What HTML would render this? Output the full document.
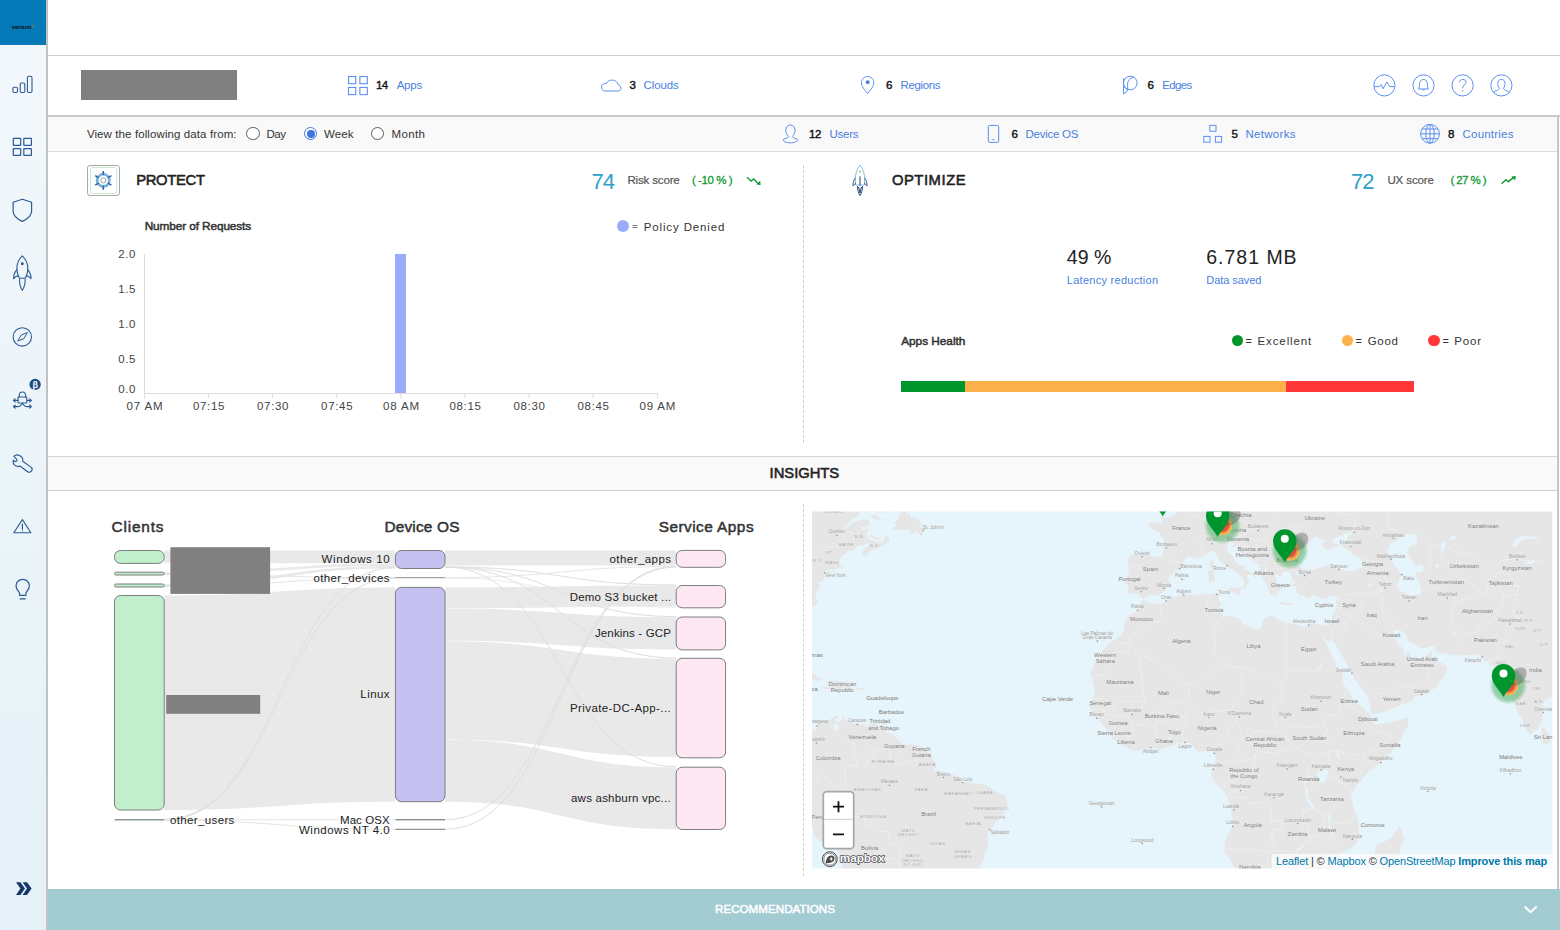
<!DOCTYPE html>
<html lang="en">
<head>
<meta charset="utf-8">
<title>Dashboard</title>
<style>
html,body{margin:0;padding:0;}
body{width:1560px;height:930px;position:relative;overflow:hidden;background:#fff;font-family:"Liberation Sans",sans-serif;}
.abs{position:absolute;}
.t{position:absolute;white-space:pre;line-height:1;font-family:"Liberation Sans",sans-serif;}
svg{position:absolute;overflow:visible;}
.ic{fill:none;stroke:#5b8ff0;stroke-width:1;}
.sic{fill:none;stroke:#2d5a94;stroke-width:1.1;stroke-linecap:round;stroke-linejoin:round;}
</style>
</head>
<body>
<!-- sidebar -->
<div class="abs" style="left:0;top:0;width:46px;height:930px;background:linear-gradient(180deg,#f3f8fc 0%,#eaf4f9 55%,#e4f1f7 100%);"></div>
<div class="abs" style="left:46px;top:0;width:2px;height:930px;background:#c2c2c2;"></div>
<div class="abs" style="left:0;top:0;width:46px;height:45px;background:#067ab8;"></div>
<span class="t" style="left:11.8px;top:25px;font-size:5.7px;font-weight:700;color:#0a0a0a;letter-spacing:-0.05px;">verizon</span>
<svg width="3" height="4" style="left:32.2px;top:24px" viewBox="0 0 3 4"><path d="M0.3,2.6 L0.9,3.4 L2.2,0.4" fill="none" stroke="#e8742a" stroke-width="0.6"/></svg>
<!-- top bar -->
<div class="abs" style="left:48px;top:55px;width:1512px;height:1px;background:#cfcfcf;"></div>
<!-- header row -->
<div class="abs" style="left:80.5px;top:70px;width:156.5px;height:30px;background:#808080;"></div>
<div class="abs" style="left:48px;top:115px;width:1512px;height:2px;background:#c9c9c9;"></div>
<!-- filter row -->
<div class="abs" style="left:48px;top:117px;width:1510px;height:34px;background:#f9f9f9;"></div>
<div class="abs" style="left:48px;top:151px;width:1510px;height:1px;background:#dcdcdc;"></div>
<div class="abs" style="left:1557px;top:116px;width:2px;height:814px;background:#c6c6c6;"></div>
<!-- radios -->
<div class="abs" style="left:246.4px;top:126.9px;width:11.2px;height:11.2px;border:1.5px solid #5c5c5c;border-radius:50%;background:#fff;"></div>
<div class="abs" style="left:303.9px;top:126.9px;width:11.2px;height:11.2px;border:1.5px solid #3d76e0;border-radius:50%;background:#fff;"></div>
<div class="abs" style="left:307.3px;top:130.3px;width:7.4px;height:7.4px;border-radius:50%;background:#3d76e0;"></div>
<div class="abs" style="left:370.9px;top:126.9px;width:11.2px;height:11.2px;border:1.5px solid #5c5c5c;border-radius:50%;background:#fff;"></div>
<!-- section divider -->
<div class="abs" style="left:803.2px;top:165px;width:0;height:277.5px;border-left:1px dashed #cfcfcf;"></div>
<div class="abs" style="left:803.2px;top:503.5px;width:0;height:372.5px;border-left:1px dashed #cfcfcf;"></div>
<!-- protect icon box -->
<div class="abs" style="left:87px;top:165px;width:30.7px;height:28.8px;border:1px solid #a9a9a9;border-radius:3px;background:#fff;"></div>
<div class="abs" style="left:89.6px;top:167.2px;width:25.6px;height:24.6px;border:1px solid #c5efd0;border-radius:2px;"></div>
<!-- chart -->
<div class="abs" style="left:144px;top:254px;width:1px;height:140px;background:#dcdcdc;"></div>
<div class="abs" style="left:144px;top:393px;width:514px;height:1px;background:#dcdcdc;"></div>
<div class="abs" style="left:394.8px;top:254px;width:11.7px;height:139px;background:#9aabfb;"></div>
<div class="abs" style="left:617px;top:220px;width:12px;height:12px;border-radius:50%;background:#9aabfb;"></div>
<!-- apps health -->
<div class="abs" style="left:901px;top:381.2px;width:64px;height:11.2px;background:#00962e;"></div>
<div class="abs" style="left:965px;top:381.2px;width:320.5px;height:11.2px;background:#fdb14b;"></div>
<div class="abs" style="left:1285.5px;top:381.2px;width:128.5px;height:11.2px;background:#fe3839;"></div>
<div class="abs" style="left:1231.5px;top:334.6px;width:11.6px;height:11.6px;border-radius:50%;background:#00962e;"></div>
<div class="abs" style="left:1341.5px;top:334.6px;width:11.6px;height:11.6px;border-radius:50%;background:#fdb14b;"></div>
<div class="abs" style="left:1428.2px;top:334.6px;width:11.6px;height:11.6px;border-radius:50%;background:#fe3839;"></div>
<!-- insights strip -->
<div class="abs" style="left:48px;top:456px;width:1509px;height:1px;background:#d6d6d6;"></div>
<div class="abs" style="left:48px;top:457px;width:1509px;height:33px;background:#f9f9f9;"></div>
<div class="abs" style="left:48px;top:490px;width:1509px;height:1px;background:#d0d0d0;"></div>
<!-- recommendations -->
<div class="abs" style="left:48px;top:889px;width:1512px;height:41px;background:#a3cbd2;"></div>
<!-- sankey -->
<svg width="1560" height="930" style="left:0;top:0" viewBox="0 0 1560 930">
<defs><pattern id="dots" width="4" height="4" patternUnits="userSpaceOnUse"><rect width="4" height="4" fill="#fde8f3"/><circle cx="1" cy="1" r="0.45" fill="#f8dcea"/><circle cx="3" cy="3" r="0.45" fill="#f8dcea"/></pattern></defs>
<path d="M164.2,550.6C279.79999999999995,550.6 279.79999999999995,550.6 395.4,550.6L395.4,563.2C279.79999999999995,563.2 279.79999999999995,563.2 164.2,563.2Z" fill="#e9e9e9"/>
<path d="M164.2,572.2C279.79999999999995,572.2 279.79999999999995,563.4 395.4,563.4L395.4,566.0C279.79999999999995,566.0 279.79999999999995,575.0 164.2,575.0Z" fill="#e9e9e9"/>
<path d="M164.2,584.0C279.79999999999995,584.0 279.79999999999995,566.0 395.4,566.0L395.4,568.4C279.79999999999995,568.4 279.79999999999995,587.0 164.2,587.0Z" fill="#e9e9e9"/>
<path d="M164.2,595.5C279.79999999999995,595.5 279.79999999999995,587.4 395.4,587.4L395.4,801.7C279.79999999999995,801.7 279.79999999999995,810.0 164.2,810.0Z" fill="#e9e9e9"/>
<path d="M164.2,574.5C279.79999999999995,574.5 279.79999999999995,577.7 395.4,577.7" fill="none" stroke="#dedede" stroke-width="0.8"/>
<path d="M164.2,586.5C279.79999999999995,586.5 279.79999999999995,578.0 395.4,578.0" fill="none" stroke="#dedede" stroke-width="0.8"/>
<path d="M164.2,819.3C279.79999999999995,819.3 279.79999999999995,567.5 395.4,567.5" fill="none" stroke="#dedede" stroke-width="1"/>
<path d="M164.2,820.0C279.79999999999995,820.0 279.79999999999995,578.0 395.4,578.0" fill="none" stroke="#dedede" stroke-width="1"/>
<path d="M164.2,819.7C279.79999999999995,819.7 279.79999999999995,819.7 395.4,819.7" fill="none" stroke="#e4e4e4" stroke-width="1"/>
<path d="M164.2,820.3C279.79999999999995,820.3 279.79999999999995,829.3 395.4,829.3" fill="none" stroke="#e4e4e4" stroke-width="1"/>
<path d="M445.0,550.6C560.6,550.6 560.6,550.6 676.2,550.6L676.2,565.5C560.6,565.5 560.6,565.5 445.0,565.5Z" fill="#e9e9e9"/>
<path d="M445.0,587.4C560.6,587.4 560.6,585.6 676.2,585.6L676.2,606.4C560.6,606.4 560.6,608.2 445.0,608.2Z" fill="#e9e9e9"/>
<path d="M445.0,608.6C560.6,608.6 560.6,617.2 676.2,617.2L676.2,649.4C560.6,649.4 560.6,640.8 445.0,640.8Z" fill="#e9e9e9"/>
<path d="M445.0,641.2C560.6,641.2 560.6,658.6 676.2,658.6L676.2,756.8C560.6,756.8 560.6,739.4 445.0,739.4Z" fill="#e9e9e9"/>
<path d="M445.0,739.8C560.6,739.8 560.6,767.4 676.2,767.4L676.2,829.3C560.6,829.3 560.6,801.7 445.0,801.7Z" fill="#e9e9e9"/>
<path d="M445.0,567.0C560.6,567.0 560.6,585.0 676.2,585.0" fill="none" stroke="#dedede" stroke-width="1"/>
<path d="M445.0,567.0C560.6,567.0 560.6,616.6 676.2,616.6" fill="none" stroke="#dedede" stroke-width="1"/>
<path d="M445.0,567.0C560.6,567.0 560.6,658.0 676.2,658.0" fill="none" stroke="#dedede" stroke-width="1"/>
<path d="M445.0,567.0C560.6,567.0 560.6,766.8 676.2,766.8" fill="none" stroke="#dedede" stroke-width="1"/>
<path d="M445.0,577.7C560.6,577.7 560.6,566.5 676.2,566.5" fill="none" stroke="#dedede" stroke-width="0.8"/>
<path d="M445.0,819.7C560.6,819.7 560.6,566.4 676.2,566.4" fill="none" stroke="#dedede" stroke-width="1"/>
<path d="M445.0,829.3C560.6,829.3 560.6,567.0 676.2,567.0" fill="none" stroke="#dedede" stroke-width="1"/>
<path d="M445.0,577.9C560.6,577.9 560.6,607.2 676.2,607.2" fill="none" stroke="#e6e6e6" stroke-width="0.8"/>
<rect x="114.5" y="550.5" width="49.7" height="12.9" rx="6" ry="6" fill="#c1efcd" stroke="#7d7d7d" stroke-width="1"/>
<rect x="114.5" y="572.2" width="49.7" height="2.8" rx="1.3999999999999773" ry="1.3999999999999773" fill="#c1efcd" stroke="#7d7d7d" stroke-width="1"/>
<rect x="114.5" y="584.0" width="49.7" height="3.0" rx="1.5" ry="1.5" fill="#c1efcd" stroke="#7d7d7d" stroke-width="1"/>
<rect x="114.5" y="595.5" width="49.7" height="214.5" rx="6" ry="6" fill="#c1efcd" stroke="#7d7d7d" stroke-width="1"/>
<rect x="114.5" y="819" width="49.7" height="1.6" rx="0.8" fill="#8d9a90"/>
<rect x="395.4" y="550.5" width="49.6" height="18.0" rx="6" ry="6" fill="#c4c1f0" stroke="#7d7d7d" stroke-width="1"/>
<rect x="395.4" y="577.2" width="49.6" height="1" fill="#8a8a8a"/>
<rect x="395.4" y="587.4" width="49.6" height="214.3" rx="6" ry="6" fill="#c4c1f0" stroke="#7d7d7d" stroke-width="1"/>
<rect x="395.4" y="819" width="49.6" height="1.4" fill="#8c8c8c"/>
<rect x="395.4" y="828.8" width="49.6" height="1" fill="#777"/>
<rect x="676.2" y="550.4" width="49.4" height="16.9" rx="6" ry="6" fill="url(#dots)" stroke="#7d7d7d" stroke-width="1"/>
<rect x="676.2" y="585.5" width="49.4" height="22.3" rx="6" ry="6" fill="url(#dots)" stroke="#7d7d7d" stroke-width="1"/>
<rect x="676.2" y="617.0" width="49.4" height="32.9" rx="6" ry="6" fill="url(#dots)" stroke="#7d7d7d" stroke-width="1"/>
<rect x="676.2" y="658.3" width="49.4" height="99.5" rx="6" ry="6" fill="url(#dots)" stroke="#7d7d7d" stroke-width="1"/>
<rect x="676.2" y="767.2" width="49.4" height="62.3" rx="6" ry="6" fill="url(#dots)" stroke="#7d7d7d" stroke-width="1"/>
<rect x="170.4" y="547.2" width="99.7" height="46.7" fill="#808080"/>
<rect x="166.2" y="695" width="94" height="18.8" fill="#808080"/>
</svg>
<!-- map -->
<svg width="1560" height="930" style="left:0;top:0" viewBox="0 0 1560 930">
<defs><clipPath id="mapclip"><rect x="812.0" y="511.5" width="740.3" height="357.0"/></clipPath></defs>
<rect x="812.0" y="511.5" width="740.3" height="357.0" fill="#e5f5fb"/>
<g clip-path="url(#mapclip)">
<path d="M887.8,512.2L890.6,511.5L858.9,511.5L859.6,511.9L861.7,512.1L865.0,511.9L868.2,511.8L871.5,511.9L875.2,512.1L879.4,512.4L883.6,512.4ZM813.6,606.6L814.8,605.5L815.9,604.7L817.1,604.1L817.7,603.0L817.7,601.4L817.1,599.4L816.1,596.9L815.2,595.2L814.3,594.4L814.3,593.8L815.0,593.6L815.8,592.9L816.7,591.7L817.8,590.1L819.0,587.8L819.5,586.0L819.5,584.5L819.2,583.6L818.5,583.0L818.0,582.1L817.8,581.0L818.4,581.0L819.8,582.3L821.0,582.4L822.2,581.3L823.1,580.1L823.8,579.0L824.3,577.4L824.5,575.3L824.7,574.0L824.7,573.2L825.0,572.5L825.7,571.8L827.0,570.9L828.9,570.1L830.7,569.5L832.6,569.4L834.2,569.2L835.6,568.9L836.8,568.6L837.7,568.3L838.6,568.0L839.6,567.7L840.3,567.6L840.7,567.8L841.6,567.7L842.9,567.4L843.5,566.9L843.5,566.1L843.2,565.5L842.7,565.1L842.6,565.2L843.1,566.0L842.7,566.4L841.6,566.6L840.8,566.4L840.4,565.8L839.9,564.9L839.0,563.7L839.1,562.6L840.0,561.7L840.4,560.7L840.2,559.4L840.6,557.9L841.8,556.1L843.6,554.5L846.2,553.1L847.8,551.9L848.5,551.0L849.6,550.7L851.0,551.0L852.6,550.6L854.5,549.5L855.9,548.3L856.8,546.9L858.4,545.9L860.8,545.5L862.5,545.1L863.7,545.0L865.1,544.4L866.7,543.5L867.9,543.3L868.6,544.0L870.0,544.3L872.1,544.5L872.2,544.7L870.3,544.8L868.9,545.2L868.0,545.8L866.4,546.9L864.0,548.5L862.5,550.5L861.8,553.0L862.1,554.9L863.2,556.1L864.5,556.2L865.9,555.3L867.4,553.9L869.0,552.1L870.7,550.7L872.3,549.8L875.0,548.7L878.7,547.4L881.7,546.2L884.1,545.1L885.6,544.2L886.3,543.4L887.5,542.5L889.3,541.6L889.8,540.6L889.3,539.7L888.9,538.5L888.6,537.2L888.3,535.9L887.8,534.6L887.0,534.7L885.8,536.2L884.7,538.4L883.7,541.2L882.6,542.3L881.6,541.5L880.1,541.4L878.2,542.0L876.0,541.9L873.5,540.9L871.4,540.1L869.7,539.3L868.7,538.8L868.2,538.6L867.5,537.4L866.6,535.1L866.4,533.8L866.8,533.5L867.5,531.9L868.5,529.2L868.5,528.0L867.5,528.5L866.1,529.0L864.3,529.5L862.5,529.2L860.9,528.0L860.5,527.3L861.5,526.9L863.1,526.8L865.4,526.8L867.5,526.1L869.4,524.8L870.2,523.5L870.0,522.3L869.3,521.2L868.1,520.2L866.1,519.6L863.3,519.4L860.2,520.0L856.7,521.1L853.8,522.4L851.5,523.8L849.1,525.4L846.8,527.4L845.0,529.3L843.9,531.1L842.0,532.9L839.5,534.7L838.1,535.5L837.8,535.1L838.8,533.9L840.9,531.8L842.6,529.7L844.0,527.5L845.5,525.7L847.1,524.2L848.9,522.4L850.8,520.4L852.7,519.0L854.8,518.3L856.9,516.6L859.0,513.9L859.6,512.1L858.7,511.5L812.0,511.5L812.0,607.4ZM882.0,520.0L875.9,515.3L868.9,514.9L873.1,518.0L878.2,519.7ZM869.4,536.3L870.8,537.2L873.6,539.2L878.2,540.5L880.6,537.6L875.9,537.6L871.3,533.7ZM827.0,573.4L831.6,572.3L834.4,570.8L834.0,570.5L831.2,571.4L826.1,572.0L824.9,573.4ZM812.1,653.9L813.9,657.3L814.6,658.1L814.6,655.6ZM817.9,660.3L818.6,660.5L816.5,658.1ZM817.2,663.9L814.9,661.7L816.3,663.7ZM820.7,666.1L818.6,662.9L820.0,665.6ZM825.1,667.5L823.3,667.5L824.7,669.9ZM836.3,671.6L832.1,671.8L835.8,672.6ZM812.1,680.8L814.9,680.7L817.0,680.7L818.4,680.8L820.3,680.5L822.7,679.6L823.6,679.1L822.7,678.9L821.0,678.3L818.5,677.5L816.7,676.5L815.8,675.3L813.6,674.1L812.0,673.6L812.0,680.8ZM829.3,674.2L826.1,675.2L828.9,675.9ZM835.6,690.3L836.4,691.2L837.1,691.0L837.8,689.6L838.9,688.8L840.3,688.7L841.7,688.4L843.1,687.9L844.8,687.8L846.9,687.9L848.4,688.2L849.4,688.6L850.1,688.4L850.7,687.5L850.6,686.6L849.8,685.8L848.3,685.2L846.2,684.8L845.6,684.4L846.6,683.9L846.2,683.3L844.6,682.5L842.8,681.9L841.0,681.5L838.9,681.2L836.7,681.0L835.0,681.1L833.7,681.4L832.5,681.3L831.3,680.9L829.9,680.8L828.3,681.0L827.5,681.3L827.5,681.8L828.2,682.7L829.6,684.0L830.8,685.3L831.8,686.6L831.8,687.3L830.8,687.6L828.4,687.5L824.7,687.0L822.7,687.1L822.4,687.8L823.2,688.3L825.0,688.7L827.3,688.9L830.2,688.9L832.5,689.1L834.3,689.6ZM856.1,687.5L856.3,690.0L863.8,689.8L863.8,687.9ZM814.4,689.8L812.0,688.4L812.0,690.3ZM882.7,699.3L884.3,697.5L881.5,697.7ZM881.0,726.2L885.2,726.0L885.7,722.6L882.9,723.3ZM910.1,531.1L910.4,532.1L909.5,533.6L909.6,534.4L910.8,534.6L911.9,534.2L913.1,533.2L914.6,532.2L916.5,531.2L917.3,531.8L917.0,533.9L917.6,534.4L919.0,533.3L919.7,533.6L919.7,535.4L920.3,536.3L921.5,536.3L922.6,534.8L923.6,531.9L923.7,529.7L922.9,528.2L921.8,527.4L920.4,527.4L920.4,526.4L921.8,524.4L921.5,523.4L919.4,523.4L918.8,522.7L919.7,521.4L919.6,520.0L918.4,518.7L916.7,517.8L914.4,517.5L912.3,517.5L910.4,517.8L909.8,517.1L910.5,515.4L910.3,514.4L909.1,514.1L907.6,514.2L905.7,514.9L905.7,513.7L907.1,511.5L901.5,511.5L901.3,512.0L899.9,515.1L898.6,517.5L897.5,519.2L896.1,521.1L894.4,523.1L894.6,524.1L896.4,524.1L896.2,525.1L893.9,527.1L892.8,528.6L893.0,529.6L894.1,530.0L896.0,529.8L898.1,529.8L900.4,530.0L903.1,530.1L906.1,530.1L908.4,530.4ZM1207.7,571.7L1208.6,577.5L1209.1,583.3L1211.9,581.6L1214.5,581.0L1214.9,574.0L1212.4,569.6ZM1187.2,576.6L1187.4,577.2L1189.1,577.8L1189.5,577.2ZM1185.6,578.7L1183.9,577.2L1180.5,579.3L1181.6,580.4L1183.7,581.0ZM1177.0,582.1L1175.1,583.0L1176.7,583.6ZM1091.7,617.0L1089.1,616.5L1090.7,617.5ZM1106.8,635.4L1105.0,636.9L1106.8,636.7ZM1086.8,637.4L1085.6,637.4L1086.3,639.2ZM1105.0,637.9L1101.9,641.2L1102.9,641.2L1105.0,639.9ZM1090.7,639.7L1091.7,641.5L1093.1,641.2L1094.2,638.7ZM1095.9,641.5L1096.3,642.7L1097.7,642.5L1097.7,640.7ZM883.6,702.8L884.1,701.4L883.0,700.9ZM885.9,705.1L884.3,704.4L885.7,706.5ZM885.7,708.7L885.0,707.8L885.0,709.7ZM891.8,712.6L892.5,712.2L891.5,711.5ZM1211.2,754.7L1208.9,754.4L1210.0,756.7ZM1201.0,769.8L1199.8,769.5L1200.3,771.1ZM813.5,830.6L814.2,832.8L813.7,833.2L814.9,835.2L817.7,838.6L820.5,841.0L823.3,842.4L826.2,843.8L829.2,845.2L831.5,846.4L833.2,847.3L834.7,848.5L836.3,850.0L838.2,851.8L840.7,853.7L842.1,856.7L842.4,860.7L842.5,864.9L842.4,868.5L978.9,868.5L979.6,866.8L981.0,864.4L982.3,862.4L983.4,860.7L984.1,858.6L984.4,856.0L985.1,853.8L986.2,851.9L987.0,849.5L987.4,846.5L987.7,844.3L988.1,842.9L988.1,841.0L987.9,838.7L987.8,836.1L987.8,833.1L988.3,831.1L989.5,829.9L990.7,828.9L991.8,828.0L993.0,826.3L994.2,823.8L995.3,821.8L996.3,820.5L997.6,819.4L999.1,818.5L1000.7,817.0L1002.3,815.1L1004.1,812.4L1005.9,808.8L1007.0,805.9L1007.2,803.8L1006.9,801.3L1005.9,798.4L1005.2,796.2L1004.6,794.9L1003.1,794.1L1000.6,793.9L998.2,793.2L995.9,792.1L993.6,790.6L991.3,788.5L988.9,786.9L986.6,785.5L984.3,784.5L981.9,783.9L979.3,783.7L976.2,783.9L972.7,783.4L968.8,782.3L965.9,782.1L964.0,782.8L962.7,782.5L962.0,781.4L961.2,780.1L960.3,778.5L958.6,777.2L956.3,776.1L953.6,775.1L950.4,774.2L947.9,774.1L945.9,774.8L944.4,775.7L943.5,776.9L943.3,776.8L943.9,775.4L944.1,774.0L944.0,772.8L942.6,771.6L939.8,770.4L937.3,770.3L935.2,771.4L933.7,771.8L932.8,771.3L932.9,770.5L934.1,769.4L935.2,768.3L936.4,767.2L936.8,765.8L936.6,764.2L935.7,762.7L934.1,761.5L932.8,759.1L931.8,755.5L930.9,753.3L930.0,752.4L929.3,751.9L928.8,751.6L927.9,750.9L926.5,749.7L923.8,748.1L919.8,746.2L916.5,745.2L913.7,745.0L910.1,744.8L905.6,744.7L902.9,744.2L902.0,743.5L900.8,742.5L899.3,741.4L898.1,740.2L897.3,738.8L896.3,737.6L895.1,736.5L893.6,735.4L891.8,734.6L890.6,733.9L890.1,733.4L889.0,733.1L887.1,732.9L886.1,731.9L885.8,730.1L884.9,728.7L883.3,727.6L881.6,727.1L880.0,727.0L878.7,726.7L877.8,726.2L877.0,725.7L876.3,725.0L876.5,724.5L877.7,724.3L878.9,724.0L880.3,723.5L879.5,723.3L876.3,723.5L873.5,723.5L871.1,723.5L870.0,723.7L870.2,724.2L869.7,724.8L868.6,725.4L867.3,725.8L865.9,725.9L864.3,725.5L862.6,724.5L860.7,723.9L858.7,723.8L856.5,723.9L853.9,724.1L852.3,723.6L851.6,722.5L850.6,721.5L849.5,720.6L848.0,720.1L846.1,720.0L844.9,719.8L844.5,719.7L844.2,718.9L844.2,717.3L843.6,716.6L842.5,716.7L842.0,717.3L842.3,718.6L842.3,719.4L842.0,719.9L841.1,720.6L839.5,721.5L837.9,722.0L836.5,722.1L835.5,721.4L834.8,720.0L835.1,719.0L836.5,718.5L837.5,718.0L837.9,717.3L837.5,716.6L836.3,715.8L835.0,716.0L833.7,717.2L832.2,718.3L830.6,719.0L829.3,719.7L828.4,720.3L826.9,720.6L824.8,720.7L823.0,721.0L821.6,721.5L820.1,722.4L818.5,723.9L817.6,725.7L817.3,727.7L816.4,729.3L814.8,730.4L813.4,731.3L812.4,732.0L812.0,732.6L812.0,827.5ZM834.0,728.7L834.0,725.1L835.8,723.3L838.4,724.6L838.6,728.3L836.3,730.7ZM846.1,841.3L848.9,845.0L846.6,844.5L843.3,840.3ZM1214.0,564.0L1213.1,559.1L1209.6,562.8L1210.5,567.6L1212.8,568.7ZM1164.1,517.7L1163.7,516.5L1162.7,515.9L1161.3,515.9L1161.1,517.7L1161.9,521.3L1161.8,523.1L1160.7,523.1L1159.0,522.7L1156.7,522.1L1154.4,522.0L1152.0,522.5L1150.0,523.2L1148.2,524.3L1147.8,525.5L1148.6,527.0L1150.2,528.2L1152.5,529.0L1154.7,530.1L1156.8,531.4L1158.3,532.2L1159.2,532.5L1159.8,533.3L1160.1,534.6L1161.1,536.3L1163.0,538.2L1164.0,540.1L1164.3,542.0L1164.3,544.4L1164.0,547.3L1163.4,550.5L1162.5,554.2L1161.6,556.4L1160.6,557.0L1159.0,557.2L1156.7,556.9L1154.6,556.6L1152.7,556.2L1149.6,555.9L1145.2,555.6L1141.4,555.5L1138.4,555.5L1135.8,555.2L1133.7,554.8L1132.1,555.1L1130.9,556.2L1129.4,557.5L1127.4,559.0L1126.9,560.8L1128.0,562.9L1128.6,565.5L1128.8,568.7L1128.7,571.6L1128.3,574.4L1127.4,576.9L1126.3,579.2L1125.6,581.3L1125.3,583.0L1125.9,584.3L1127.3,585.1L1128.1,586.4L1128.4,588.1L1128.3,590.2L1127.8,592.7L1128.8,594.0L1131.4,594.0L1133.7,593.7L1135.8,593.1L1137.7,593.8L1139.3,595.6L1141.0,597.2L1142.6,598.7L1143.8,599.2L1144.5,598.7L1145.9,597.7L1147.9,596.3L1150.0,595.6L1152.1,595.6L1154.4,595.5L1156.7,595.2L1158.3,595.2L1159.2,595.5L1160.2,594.8L1161.1,593.1L1162.6,591.9L1164.7,591.0L1166.1,589.6L1166.8,587.5L1168.0,585.8L1169.6,584.7L1169.8,583.0L1168.7,580.9L1168.5,579.1L1169.2,577.7L1170.4,575.9L1172.3,573.9L1173.7,572.3L1174.6,571.1L1176.3,570.1L1178.6,569.2L1180.9,568.0L1183.2,566.5L1184.5,565.2L1184.8,564.0L1184.5,562.8L1183.8,561.6L1184.3,559.9L1185.9,557.8L1187.8,556.7L1189.9,556.7L1191.9,556.9L1193.7,557.2L1195.4,557.6L1196.8,558.2L1198.3,558.4L1199.9,558.1L1201.4,557.2L1202.8,555.6L1204.6,554.4L1206.7,553.5L1208.5,552.4L1210.2,551.2L1212.0,551.0L1214.1,551.9L1215.8,553.3L1216.9,555.2L1217.7,557.0L1218.2,558.8L1219.1,560.5L1220.5,562.0L1222.0,563.2L1223.7,564.1L1225.1,565.2L1226.2,566.4L1227.2,567.3L1227.9,568.1L1229.4,568.8L1231.7,569.5L1233.6,570.5L1235.0,571.7L1236.4,572.6L1237.8,573.2L1238.7,574.0L1239.2,575.2L1240.2,576.1L1241.8,576.6L1243.0,577.8L1243.7,579.5L1244.2,581.4L1244.4,583.4L1244.0,585.3L1243.0,587.0L1242.5,588.0L1242.6,588.4L1243.1,588.7L1244.1,588.7L1245.0,588.0L1245.9,586.7L1246.5,585.5L1246.7,584.4L1247.4,583.6L1248.6,583.0L1249.2,582.1L1249.2,581.0L1248.6,580.0L1247.4,579.1L1247.2,577.7L1247.9,575.6L1248.6,574.5L1249.3,574.2L1250.5,574.5L1252.1,575.3L1253.0,576.1L1253.3,576.6L1253.8,577.2L1254.8,577.8L1255.4,577.7L1255.6,576.8L1255.1,575.6L1254.0,574.0L1252.1,572.5L1249.5,571.2L1247.2,569.9L1245.1,568.7L1244.3,567.5L1244.8,566.4L1244.6,565.7L1243.9,565.5L1242.5,565.4L1240.4,565.2L1238.5,564.4L1236.6,562.9L1234.9,560.5L1233.2,557.2L1231.4,554.7L1229.3,553.2L1227.9,551.9L1227.2,551.0L1227.1,549.8L1227.5,548.2L1227.5,546.6L1227.1,545.1L1227.8,543.7L1229.6,542.6L1231.4,542.2L1233.0,542.5L1233.5,543.7L1232.8,545.8L1232.9,547.1L1233.8,547.7L1234.9,547.3L1236.0,545.7L1237.2,545.4L1238.4,546.3L1239.3,548.2L1240.0,551.0L1241.7,553.3L1244.5,555.2L1247.2,556.9L1249.8,558.4L1251.7,559.7L1253.1,560.7L1255.0,562.1L1257.3,563.7L1258.9,565.8L1259.7,568.1L1260.1,570.6L1260.0,573.1L1260.6,575.1L1262.0,576.7L1262.9,578.1L1263.4,579.3L1264.3,580.5L1265.6,582.0L1266.6,583.7L1267.4,585.7L1268.1,587.4L1268.5,588.8L1269.1,590.6L1269.8,592.9L1270.3,594.2L1270.5,594.8L1271.1,594.8L1272.0,594.2L1272.8,594.7L1273.5,596.3L1274.3,596.5L1275.3,595.6L1276.2,595.6L1277.1,596.5L1277.3,595.8L1276.6,593.5L1276.9,592.1L1278.3,591.7L1279.2,590.8L1279.7,589.6L1280.3,589.3L1281.0,590.0L1281.4,589.6L1281.5,588.0L1281.0,587.0L1282.3,587.8L1283.9,587.8L1279.5,583.8L1277.1,582.7L1276.7,581.8L1276.2,580.1L1276.2,578.4L1275.9,576.8L1275.2,575.3L1275.2,574.4L1275.9,574.0L1276.8,574.2L1278.0,575.3L1279.1,576.1L1280.3,576.9L1281.5,576.9L1282.6,576.4L1282.6,575.4L1281.5,574.1L1281.5,573.0L1282.6,572.1L1285.0,571.8L1288.4,571.9L1290.5,572.7L1291.2,574.2L1291.6,575.3L1291.6,576.2L1292.2,576.1L1292.6,575.8L1292.3,576.2L1291.5,577.9L1291.2,579.2L1292.1,579.8L1293.9,579.8L1294.7,580.7L1294.5,582.4L1293.9,583.6L1293.0,584.3L1292.4,585.3L1292.2,586.4L1293.0,586.7L1294.9,586.3L1296.0,586.8L1296.5,588.2L1296.6,589.6L1296.4,591.0L1296.5,592.3L1297.0,593.4L1298.2,594.0L1300.3,594.0L1301.0,594.5L1300.3,595.4L1300.7,595.8L1302.1,595.7L1303.4,595.8L1304.5,596.1L1305.7,596.7L1306.9,597.8L1308.4,598.3L1310.2,598.2L1311.4,597.4L1311.9,595.8L1313.1,595.2L1315.2,595.5L1317.5,596.5L1319.8,598.1L1322.3,598.9L1325.1,598.7L1327.6,597.8L1329.7,596.2L1331.8,595.6L1333.9,596.2L1335.7,596.4L1337.2,596.3L1337.6,597.0L1336.9,598.7L1336.4,600.2L1336.2,601.5L1336.3,603.0L1336.6,604.7L1336.3,606.8L1335.4,609.5L1334.5,611.9L1333.5,614.1L1332.9,615.5L1332.5,616.3L1332.1,617.7L1331.7,619.7L1330.8,621.7L1329.5,623.6L1327.7,624.9L1325.4,625.6L1323.2,625.6L1321.2,625.1L1320.5,626.5L1321.0,629.9L1321.9,633.3L1323.5,636.7L1325.4,639.5L1327.7,641.6L1329.3,642.2L1330.3,641.0L1331.1,638.8L1332.0,635.5L1332.2,635.6L1331.8,639.2L1332.1,641.1L1333.1,641.3L1335.0,643.8L1338.1,648.6L1340.4,652.5L1342.0,655.7L1344.2,659.5L1347.0,663.9L1349.3,667.9L1350.9,671.5L1352.3,674.6L1353.5,677.2L1355.3,680.2L1357.9,683.5L1360.2,686.5L1362.3,689.3L1364.5,692.2L1366.9,695.3L1368.4,698.5L1369.1,702.0L1369.8,705.6L1370.6,709.5L1371.3,712.2L1371.9,713.7L1374.0,714.3L1377.5,713.9L1380.9,713.1L1384.4,711.7L1387.9,710.3L1391.4,709.0L1394.6,707.7L1397.4,706.4L1400.9,705.0L1405.1,703.5L1408.6,702.3L1411.4,701.4L1412.8,700.0L1412.8,698.2L1414.4,696.8L1417.6,696.0L1420.9,695.3L1424.2,694.7L1426.1,693.8L1426.8,692.4L1428.4,691.3L1430.7,690.6L1433.6,689.1L1437.1,686.8L1438.7,684.6L1438.5,682.8L1439.4,681.0L1441.5,679.3L1444.0,676.0L1446.8,671.0L1447.1,667.3L1445.0,664.9L1441.8,663.1L1437.3,661.8L1434.4,660.1L1432.8,657.9L1432.1,655.1L1432.3,651.5L1432.0,650.1L1431.3,650.8L1430.0,652.1L1428.1,654.0L1426.1,656.1L1424.1,658.6L1420.9,660.0L1416.7,660.3L1413.5,660.4L1411.1,660.3L1410.0,658.3L1410.0,654.4L1409.6,652.0L1408.9,651.1L1408.0,651.5L1406.8,653.1L1406.2,654.9L1406.2,656.8L1405.5,656.3L1404.1,653.4L1403.2,650.9L1402.7,649.0L1401.3,646.8L1399.0,644.6L1397.4,642.6L1396.4,640.8L1395.3,638.6L1393.9,635.8L1393.2,633.6L1393.2,632.1L1394.2,630.8L1396.3,629.8L1398.2,629.7L1399.8,630.6L1401.3,631.1L1402.7,631.2L1404.2,632.7L1405.9,635.5L1407.4,638.2L1408.8,640.9L1410.8,642.7L1413.3,643.5L1415.7,645.0L1417.8,647.0L1420.3,648.2L1423.4,648.7L1425.8,648.3L1427.7,647.1L1429.5,646.2L1431.4,645.7L1433.0,646.0L1434.4,647.0L1435.5,648.7L1436.2,651.2L1438.3,652.8L1441.8,653.5L1445.6,654.1L1449.8,654.6L1453.1,655.0L1455.4,655.2L1458.8,655.2L1463.2,655.0L1466.7,655.0L1469.3,655.2L1472.6,655.0L1476.8,654.3L1479.3,654.6L1480.0,656.1L1481.0,657.5L1482.4,658.7L1484.2,660.1L1486.3,661.8L1488.1,663.5L1489.8,665.2L1492.2,666.2L1495.5,666.4L1495.6,667.3L1492.6,668.7L1491.0,669.5L1490.9,669.6L1492.0,671.2L1494.5,674.2L1496.7,676.0L1498.8,676.7L1501.2,676.6L1503.7,675.7L1505.6,674.5L1506.8,673.0L1507.5,671.6L1507.7,670.2L1508.2,670.3L1508.9,672.0L1509.0,674.1L1508.5,676.7L1508.4,679.8L1508.6,683.3L1509.1,686.5L1509.8,689.3L1510.5,692.8L1511.2,697.0L1512.4,700.5L1514.0,703.2L1515.6,706.8L1517.3,711.1L1519.2,715.2L1521.6,719.1L1523.3,722.5L1524.5,725.4L1525.4,728.0L1526.1,730.3L1527.6,732.3L1529.8,734.2L1531.6,734.2L1533.2,732.3L1534.8,731.0L1536.7,730.1L1538.0,728.5L1538.7,726.2L1539.7,725.0L1541.1,724.8L1541.7,723.4L1541.5,720.9L1542.0,717.9L1543.1,714.2L1543.5,710.2L1543.0,705.9L1543.5,702.7L1544.9,700.6L1547.4,698.7L1551.2,697.1L1552.3,696.3L1552.3,511.5L1176.4,511.5L1176.4,513.0L1175.2,514.1L1173.5,515.3L1171.1,516.6L1168.6,517.6L1165.8,518.1ZM1300.0,574.3L1296.7,574.3L1294.4,573.4L1297.7,571.4L1300.9,571.1L1304.6,571.4L1308.4,572.7L1304.6,574.0ZM1452.4,535.3L1456.6,536.6L1453.8,539.8L1449.1,539.2ZM1341.3,544.8L1340.4,544.8L1340.2,545.3L1340.9,546.0L1342.5,546.9L1343.9,547.7L1345.1,548.4L1347.2,549.6L1350.2,551.5L1352.4,553.2L1353.8,554.7L1356.0,556.4L1359.0,558.2L1361.3,560.4L1362.8,563.0L1363.5,565.1L1363.4,566.7L1361.1,568.4L1356.7,570.2L1353.0,571.2L1350.0,571.3L1346.8,571.1L1343.6,570.5L1341.1,570.0L1339.5,569.5L1337.3,568.3L1334.6,566.2L1331.7,565.2L1328.6,565.3L1325.8,565.5L1323.5,565.9L1321.2,566.7L1318.9,567.8L1315.9,568.8L1312.4,569.5L1309.3,569.8L1306.5,569.7L1303.9,569.1L1301.6,568.1L1299.9,566.2L1298.7,563.5L1298.5,561.1L1299.3,559.0L1300.6,556.4L1302.2,553.3L1304.2,550.2L1306.7,547.1L1308.5,544.4L1309.6,542.2L1310.9,540.1L1312.2,538.2L1313.7,537.1L1315.4,536.8L1316.9,536.8L1318.0,537.3L1319.3,538.1L1320.7,539.3L1322.6,539.9L1324.9,540.1L1324.8,541.2L1322.2,543.2L1322.0,545.5L1324.1,548.0L1326.1,549.6L1327.9,550.2L1330.3,549.6L1333.1,547.7L1335.7,546.5L1338.3,545.8L1339.8,545.3L1340.3,544.8L1339.8,544.7L1338.1,544.3L1335.0,543.9L1333.2,542.7L1332.5,540.8L1332.6,539.4L1333.5,538.6L1335.7,537.6L1339.2,536.5L1341.8,535.4L1343.4,534.2L1345.9,533.4L1349.1,532.9L1351.2,532.9L1352.2,533.4L1351.5,534.2L1349.1,535.4L1347.5,537.1L1346.6,539.3L1345.5,541.5L1344.4,543.6L1343.0,544.7ZM1514.5,546.9L1512.8,546.0L1512.8,543.9L1514.5,540.8L1516.8,538.4L1519.8,536.8L1523.1,536.1L1526.6,536.4L1530.1,536.6L1533.6,536.6L1536.1,536.9L1537.8,537.6L1538.1,538.2L1537.2,538.9L1534.8,539.0L1531.1,538.7L1527.6,538.7L1524.4,539.0L1521.6,540.4L1519.2,543.0L1517.4,545.1L1516.0,546.6ZM1445.8,543.6L1444.0,549.3L1442.1,554.3L1441.2,550.5L1440.7,544.3L1444.0,541.1ZM1534.4,562.8L1529.3,564.3L1524.6,562.8L1528.3,560.7L1533.9,561.0ZM1389.9,557.0L1388.1,552.7L1387.5,549.9L1388.2,548.7L1389.1,546.8L1390.3,544.3L1392.1,542.7L1394.7,542.0L1396.7,540.8L1398.1,538.8L1399.7,537.6L1401.6,536.9L1403.9,535.8L1406.7,534.2L1409.6,533.5L1412.6,533.8L1415.0,534.6L1416.6,535.9L1417.2,538.7L1416.7,542.8L1415.5,544.7L1413.7,544.4L1411.6,545.5L1409.3,548.0L1407.7,549.6L1407.0,550.2L1407.0,551.6L1407.7,553.8L1408.7,555.6L1409.8,557.2L1411.4,559.1L1413.2,561.6L1414.4,564.0L1414.8,566.4L1416.1,566.7L1416.0,565.8L1419.3,564.6L1423.9,567.0L1423.3,568.9L1423.4,569.0L1423.4,571.1L1421.3,572.3L1419.0,572.6L1416.7,572.0L1415.8,573.0L1416.2,575.6L1416.8,577.7L1417.5,579.1L1418.5,580.7L1419.6,582.4L1420.4,585.2L1420.9,589.2L1421.0,592.0L1420.8,593.7L1419.4,594.7L1416.8,594.9L1414.0,595.2L1411.0,595.5L1408.0,594.7L1404.9,592.7L1402.2,591.5L1399.6,590.9L1398.1,589.4L1397.6,586.8L1397.8,584.4L1398.8,582.1L1399.4,580.0L1399.6,577.9L1400.8,576.4L1402.8,575.4L1403.0,574.5L1401.1,573.8L1399.8,572.9L1399.1,571.7L1397.7,569.6L1395.6,566.6L1393.6,563.7L1391.8,560.6ZM1437.9,564.0L1439.3,567.0L1436.5,568.1L1435.1,564.6ZM1371.3,583.0L1372.2,585.0L1369.9,586.7L1367.5,585.5ZM1381.5,587.8L1382.9,592.3L1381.1,592.9L1379.7,587.2ZM1262.5,578.4L1261.1,578.4L1263.2,580.4ZM1293.0,580.7L1290.2,581.6L1290.7,582.7L1293.2,582.4ZM1291.4,585.5L1290.2,585.3L1290.9,587.2ZM1266.2,587.2L1264.6,586.7L1265.5,588.1ZM1239.1,595.5L1239.9,594.8L1239.9,593.1L1240.4,591.0L1241.6,588.3L1240.9,587.2L1238.4,587.8L1235.7,587.9L1233.1,587.5L1230.7,587.8L1228.6,588.9L1227.7,589.8L1228.0,590.3L1229.3,591.0L1231.4,591.9L1233.5,593.0L1235.6,594.4L1237.4,595.2ZM1288.8,593.4L1287.4,593.1L1288.3,594.2ZM1300.9,597.0L1298.8,598.4L1300.4,599.5ZM1279.2,602.0L1279.5,603.6L1285.1,605.2L1291.6,604.7L1292.1,603.6L1286.9,603.1L1282.3,601.7ZM1323.3,607.1L1327.7,605.0L1330.5,601.4L1323.3,603.1L1320.0,604.7L1320.7,606.3ZM1423.5,714.9L1418.1,714.4L1421.1,715.8ZM1544.5,744.3L1546.3,744.1L1548.8,742.9L1550.2,741.3L1550.7,739.2L1550.2,736.8L1548.6,734.3L1546.8,731.6L1544.6,728.8L1543.0,727.4L1542.1,727.5L1541.5,729.2L1541.3,732.5L1541.3,735.3L1541.5,737.8L1541.8,740.2L1542.3,742.4L1543.2,743.8ZM1130.9,613.9L1129.1,615.6L1127.4,618.1L1125.9,620.4L1124.5,622.5L1123.8,624.2L1123.8,625.5L1124.1,626.9L1124.5,628.5L1124.1,630.7L1122.7,633.5L1120.5,635.9L1117.4,637.9L1114.3,639.7L1111.0,641.2L1108.8,643.0L1107.6,645.0L1105.8,647.2L1103.2,649.7L1101.3,652.8L1100.2,656.5L1098.6,659.4L1096.5,661.6L1094.9,663.5L1094.0,665.2L1092.8,667.9L1091.4,671.5L1090.6,674.1L1090.2,675.6L1090.9,677.0L1092.7,678.3L1093.3,679.9L1092.8,681.8L1093.0,683.3L1093.7,684.5L1094.2,686.2L1094.7,688.3L1094.6,690.6L1093.9,693.2L1093.3,695.6L1092.8,697.9L1092.0,700.2L1090.9,702.5L1089.7,704.0L1088.5,704.7L1088.8,705.9L1090.4,707.5L1091.3,709.0L1091.6,710.3L1091.7,712.2L1091.7,714.4L1093.0,716.2L1095.5,717.3L1097.5,718.9L1098.9,720.9L1100.2,722.5L1101.3,723.6L1102.9,725.3L1104.7,727.6L1106.1,729.0L1107.1,729.7L1107.6,730.8L1107.9,732.4L1108.8,734.3L1110.4,736.6L1112.4,738.4L1114.7,739.7L1116.7,741.0L1118.4,742.4L1120.7,743.8L1123.7,745.4L1126.4,746.9L1128.7,748.2L1131.1,749.5L1133.4,750.9L1136.3,751.0L1139.8,749.9L1142.7,749.1L1145.0,748.6L1147.4,748.2L1149.7,747.7L1152.0,747.7L1154.4,748.2L1156.6,748.8L1158.7,749.6L1161.0,749.5L1163.6,748.5L1165.8,747.6L1167.6,747.0L1169.8,746.3L1172.4,745.6L1174.0,745.0L1174.7,744.3L1176.5,743.7L1179.3,743.3L1181.8,742.9L1184.2,742.7L1186.6,742.7L1189.2,742.9L1191.1,743.6L1192.2,744.7L1193.3,746.0L1194.2,747.3L1195.4,749.0L1196.8,751.0L1198.6,751.9L1201.0,751.6L1203.6,751.3L1206.7,750.9L1208.9,750.8L1210.3,751.0L1211.8,751.8L1213.4,753.1L1214.6,754.9L1215.3,757.1L1215.5,758.7L1215.3,759.5L1215.1,760.7L1214.8,762.0L1214.6,763.7L1214.4,765.7L1214.0,767.3L1213.5,768.7L1212.6,770.5L1211.2,773.0L1211.1,775.5L1212.3,778.2L1213.7,780.5L1215.3,782.5L1217.3,784.8L1219.6,787.2L1221.7,789.4L1223.6,791.4L1225.0,793.2L1225.9,794.8L1226.5,796.2L1226.7,797.6L1227.4,799.3L1228.6,801.3L1229.8,803.4L1231.2,805.6L1231.7,807.6L1231.2,809.4L1231.0,811.1L1231.0,812.7L1231.7,815.2L1233.1,818.6L1233.3,822.1L1232.4,825.7L1230.9,829.1L1228.8,832.3L1227.3,835.3L1226.4,838.0L1225.5,840.9L1224.8,843.9L1224.5,847.2L1224.5,850.7L1225.9,854.2L1228.7,857.7L1231.0,861.2L1232.9,864.8L1234.6,867.7L1235.1,868.5L1332.6,868.5L1332.3,867.7L1331.9,865.1L1332.4,862.3L1334.0,859.8L1336.8,857.7L1339.1,855.6L1341.0,853.5L1343.7,851.6L1347.2,850.0L1350.7,848.0L1354.2,845.7L1356.8,843.0L1358.7,840.0L1359.4,837.4L1358.9,835.1L1358.7,831.6L1358.7,827.1L1358.5,823.1L1358.0,819.7L1357.1,816.9L1355.7,814.6L1354.6,811.8L1353.9,808.4L1353.3,805.4L1352.9,802.7L1352.1,800.5L1350.9,798.7L1350.8,796.7L1351.7,794.5L1352.8,792.2L1353.9,790.0L1355.0,788.0L1355.9,786.2L1357.3,784.3L1359.2,782.3L1360.8,780.7L1362.2,779.3L1364.1,777.2L1366.4,774.3L1369.3,771.3L1372.8,768.2L1376.1,765.5L1379.1,763.3L1382.6,760.5L1386.5,757.2L1389.9,753.9L1392.7,750.5L1395.4,747.2L1398.0,743.8L1400.1,740.5L1401.7,737.1L1403.5,733.8L1405.6,730.4L1407.3,727.6L1408.4,725.5L1408.7,723.7L1408.0,722.2L1407.8,720.6L1408.2,718.9L1407.5,718.0L1405.7,717.7L1403.3,718.3L1400.3,719.7L1397.4,720.6L1394.6,721.0L1391.4,721.7L1387.9,722.4L1384.4,723.2L1380.9,724.0L1378.0,724.4L1375.7,724.3L1373.7,723.2L1372.1,721.1L1370.6,720.0L1369.2,719.6L1369.3,719.0L1370.9,718.3L1371.4,717.1L1370.7,715.5L1369.5,714.0L1367.9,712.6L1365.7,710.5L1362.9,707.5L1360.3,705.4L1358.0,704.3L1356.0,703.0L1354.4,701.6L1353.1,699.8L1352.2,697.5L1351.0,694.7L1349.6,691.4L1347.7,689.0L1345.4,687.3L1343.9,685.5L1343.2,683.3L1342.9,680.6L1342.9,677.3L1342.5,674.5L1341.8,672.1L1340.1,669.7L1337.3,667.3L1335.6,664.9L1335.2,662.4L1333.8,658.8L1331.4,653.9L1329.6,650.2L1328.2,647.7L1327.0,645.5L1326.1,643.5L1324.7,640.9L1322.8,637.9L1321.7,635.2L1321.4,632.8L1320.9,629.8L1320.3,626.3L1318.5,624.2L1315.5,623.4L1312.7,623.5L1310.1,624.6L1307.8,625.6L1305.7,626.5L1302.9,626.5L1299.4,625.6L1296.5,624.7L1294.2,623.9L1291.2,623.4L1287.7,623.2L1284.8,622.5L1282.5,621.5L1280.4,620.7L1278.5,620.2L1277.3,619.2L1276.6,617.9L1275.2,616.9L1273.1,616.3L1270.9,616.1L1268.5,616.5L1266.2,617.6L1263.9,619.5L1262.6,622.1L1262.4,625.5L1261.2,627.8L1259.1,629.1L1256.9,629.5L1254.5,629.0L1251.7,627.8L1248.5,626.0L1245.5,624.6L1242.7,623.5L1241.0,622.0L1240.6,619.9L1239.5,618.7L1237.9,618.4L1235.6,617.8L1232.5,616.7L1229.6,616.2L1226.8,616.2L1224.5,615.7L1222.6,614.6L1221.2,613.7L1220.3,612.9L1219.0,612.1L1217.4,611.3L1217.4,609.8L1219.0,607.7L1220.2,605.9L1220.9,604.5L1220.6,603.0L1219.5,601.4L1218.8,599.6L1218.5,597.7L1219.0,596.0L1220.2,594.5L1219.9,593.6L1218.3,593.5L1216.9,593.1L1215.8,592.6L1214.0,592.7L1211.7,593.6L1209.3,594.1L1207.0,594.4L1204.3,594.4L1201.3,594.1L1198.6,594.4L1196.3,595.2L1194.0,595.4L1191.6,594.8L1188.7,594.7L1185.2,594.9L1181.7,595.5L1178.2,596.3L1175.3,597.2L1173.0,598.0L1170.5,598.9L1168.0,600.0L1166.0,601.0L1164.6,601.8L1163.0,602.8L1161.1,603.9L1159.0,604.1L1156.7,603.6L1154.4,603.5L1152.0,603.7L1149.3,602.9L1146.3,601.0L1144.1,600.2L1142.7,600.5L1141.5,601.7L1140.6,603.9L1139.6,606.3L1138.4,609.0L1136.9,610.9L1135.0,611.9L1133.0,612.9ZM1316.3,670.9L1315.8,669.4L1320.0,667.0L1321.9,661.7L1323.3,661.7L1321.4,668.0ZM1236.6,711.0L1237.5,713.3L1235.2,713.8L1234.3,711.0ZM1170.9,742.2L1169.5,742.6L1168.6,739.9L1168.1,737.7L1170.4,737.2ZM1314.9,760.9L1315.8,760.9L1314.0,763.5L1311.6,765.8L1313.0,762.7ZM1317.5,774.5L1317.6,772.5L1318.6,771.2L1320.5,770.4L1322.6,769.9L1324.9,769.8L1326.7,770.2L1327.8,771.1L1328.3,772.5L1328.1,774.5L1327.6,776.7L1326.9,778.9L1325.7,780.5L1324.1,781.7L1322.3,782.3L1320.5,782.5L1319.1,782.0L1318.2,780.7L1317.6,778.9L1317.5,776.7ZM1306.0,778.7L1305.6,782.2L1304.2,781.8L1304.2,778.7ZM1305.3,794.8L1305.2,791.6L1305.5,788.0L1306.0,786.3L1307.0,786.5L1307.7,788.1L1308.1,791.0L1308.1,793.6L1307.7,795.8L1308.5,798.2L1310.6,800.9L1312.3,804.0L1313.7,807.3L1313.8,809.2L1312.7,809.7L1311.4,808.5L1310.0,805.9L1308.5,803.2L1306.9,800.5L1305.8,797.7ZM1304.6,813.0L1302.3,812.6L1302.3,809.4L1305.1,809.4ZM1328.8,821.6L1328.5,818.7L1327.8,815.5L1328.1,814.1L1329.2,814.3L1330.2,815.9L1330.9,818.8L1330.7,821.4L1329.8,823.7L1330.0,826.5L1331.4,829.9L1332.5,832.5L1333.2,834.4L1332.9,835.3L1331.8,835.3L1330.9,834.4L1330.2,832.5L1329.5,830.1L1328.8,827.2L1328.5,824.3ZM1302.8,847.3L1298.1,851.0L1295.3,851.9L1300.0,847.3L1304.2,845.4ZM1340.1,757.8L1339.1,760.0L1337.3,756.4L1336.3,751.1L1338.2,751.5ZM1353.8,798.2L1352.2,796.7L1353.1,799.8ZM1378.6,843.5L1375.9,846.7L1375.0,852.1L1374.9,856.5L1375.6,860.0L1374.8,864.2L1372.7,868.5L1395.3,868.5L1395.4,868.3L1397.0,862.4L1398.4,857.1L1399.6,852.4L1400.6,848.3L1401.6,844.9L1402.7,842.3L1404.1,840.7L1403.4,836.1L1400.6,828.6L1398.7,825.9L1397.5,828.2L1395.9,831.1L1393.8,834.5L1390.8,837.6L1387.1,840.3L1383.0,842.3Z" fill="#e6e6e6" fill-rule="evenodd"/>
<path d="M1129.1,643.1L1129.1,637.9L1152.7,622.5L1163.9,620.4L1161.6,614.1L1159.2,604.4M1090.7,676.5L1108.9,674.2L1108.9,666.1L1113.6,664.1L1113.6,651.4L1129.1,651.4L1129.1,643.1M1108.7,643.1L1129.1,643.1M1129.1,645.0L1147.1,656.4M1147.1,656.4L1139.2,656.4L1143.9,696.8L1144.8,701.4L1126.2,701.4L1115.9,700.9L1112.6,704.6M1147.1,656.4L1175.1,675.2L1184.9,685.1L1189.1,684.4L1196.5,683.2L1225.4,663.7M1225.4,663.7L1215.6,657.3L1213.3,650.4L1215.6,649.0L1213.8,630.3L1217.5,626.7L1217.5,622.0L1223.1,617.8L1223.5,615.1M1213.8,630.3L1211.4,620.4L1204.5,611.4L1207.7,606.6L1208.2,596.7L1209.6,594.5M1225.4,663.7L1235.7,668.0L1239.4,666.1L1281.3,682.8L1281.3,680.4L1286.0,680.4L1286.0,670.9L1286.0,623.0M1286.0,670.9L1316.3,670.9M1316.3,670.9L1340.9,670.9M1239.4,666.1L1241.7,675.7L1241.7,694.9L1232.4,706.0L1232.9,709.7M1281.3,682.8L1281.3,700.5L1276.2,701.4L1272.0,714.2L1276.2,722.4M1189.1,684.4L1189.1,697.2L1185.8,701.9L1170.4,704.2L1166.2,703.2L1160.2,707.4L1153.2,711.9L1149.0,715.1L1143.9,724.6M1186.3,718.8L1188.6,710.6L1202.1,712.9L1216.1,711.5L1232.9,709.7L1235.7,715.6L1237.5,719.7L1233.8,721.9L1229.6,729.2L1223.1,741.7L1209.6,749.8M1170.4,704.2L1179.8,715.6L1186.3,718.8L1182.5,730.5L1182.1,742.8M1179.8,715.6L1173.7,721.9L1169.0,721.5L1156.5,721.9L1156.5,728.7L1156.9,748.4M1173.7,721.9L1177.0,731.0L1177.2,743.5M1169.0,721.5L1171.8,733.2L1172.3,740.4L1175.1,744.0M1143.9,724.6L1132.2,725.6L1129.9,737.2L1134.5,745.3L1134.3,750.9M1143.9,724.6L1156.5,728.7M1132.2,725.6L1130.8,721.9L1127.6,715.6L1116.4,715.6L1112.6,704.6M1129.9,737.2L1125.7,735.4L1121.5,733.2L1115.9,740.4M1121.5,733.2L1120.1,729.6L1117.3,726.5L1111.2,726.9L1107.6,730.7M1116.4,715.6L1105.7,714.2L1099.7,721.9M1105.7,714.2L1098.7,714.2L1092.6,715.6M1112.6,704.6L1105.2,698.6L1092.6,698.9M1091.5,710.1L1099.6,709.2L1105.2,711.0L1099.6,712.4L1091.7,712.4M1276.2,722.4L1279.9,732.3L1297.2,748.4L1313.5,755.5L1327.9,752.4L1336.8,750.6M1276.2,722.4L1281.3,717.4L1290.7,726.5L1307.0,727.4L1323.3,725.6L1327.9,728.7L1323.3,736.3L1336.8,750.6M1323.3,725.6L1324.2,716.5L1337.7,714.2L1339.1,706.5L1346.6,692.1L1348.8,690.3M1339.1,706.5L1351.2,705.5L1361.5,712.9L1367.1,715.1L1369.8,714.4M1367.1,715.1L1364.3,721.9L1369.7,719.7M1364.3,721.9L1372.2,729.2L1388.5,735.4L1393.2,735.4L1379.2,748.9L1364.8,753.5M1364.8,753.5L1360.6,774.7L1363.1,778.3M1336.8,750.6L1351.2,755.5L1364.8,753.5M1336.8,750.6L1327.9,752.4L1330.3,765.8L1327.5,770.7L1327.5,770.8M1327.8,775.7L1344.7,784.4L1345.6,787.5L1352.2,792.0M1313.5,755.5L1313.0,760.9L1307.4,771.1L1307.4,777.3L1311.6,775.8L1317.5,775.7M1311.6,775.8L1313.0,781.3L1304.6,783.1L1304.9,782.0M1305.5,778.7L1305.6,778.2M1313.0,781.3L1311.2,790.7L1308.1,790.9M1305.5,787.9L1304.6,783.1M1279.9,732.3L1258.0,731.0L1241.7,737.7L1237.1,744.8L1239.9,753.8L1245.0,761.3L1236.6,761.5L1231.5,761.3L1222.2,761.3L1215.2,760.9M1237.5,719.7L1239.4,726.5L1241.7,737.7M1245.0,761.3L1256.2,755.5L1256.2,751.5L1273.9,752.9L1297.2,748.4M1256.2,755.5L1251.5,773.3L1244.1,780.9L1243.6,788.9L1230.5,791.6L1226.5,796.7M1222.2,761.3L1222.2,766.7L1215.2,766.7M1236.6,761.5L1231.0,765.3L1237.1,773.8L1234.3,781.8L1223.6,781.8L1225.0,787.1L1221.2,788.4M1226.6,796.9L1231.0,797.4L1246.9,797.4L1248.7,803.6L1259.9,802.3L1264.1,802.3L1271.1,803.6L1271.1,821.2L1281.3,820.3L1281.3,829.3M1281.3,829.3L1272.0,829.3L1272.0,844.0L1278.1,850.5L1287.4,851.5M1271.1,821.2L1273.4,821.2L1281.3,820.3L1287.4,821.2L1296.3,823.0L1301.8,827.1L1303.2,826.8M1303.2,826.8L1308.4,825.7L1308.4,831.2L1303.2,828.4L1303.2,826.8M1303.2,826.8L1302.8,812.7M1304.9,811.2L1311.3,808.4M1313.8,808.1L1322.8,813.0L1327.9,813.5M1308.4,831.2L1310.2,838.0L1323.3,833.9L1321.9,832.1L1324.2,827.1L1324.7,813.9L1322.8,813.0M1310.2,838.0L1311.2,841.3L1304.2,842.6L1295.3,851.9M1295.3,851.9L1287.4,851.5M1311.2,841.3L1322.8,846.4L1322.8,856.1L1321.9,864.2L1318.8,868.5M1332.1,823.0L1344.2,823.4L1357.5,818.1M1331.2,836.2L1336.8,843.1L1334.0,848.2L1329.3,841.7L1330.3,835.7M1224.5,848.9L1234.7,849.6L1255.2,849.6L1267.4,852.4L1278.1,850.5M1267.4,852.4L1267.4,868.5M1287.4,851.5L1291.6,859.9L1298.6,864.2L1302.8,868.5M1329.1,624.6L1332.1,633.9M1334.9,615.1L1336.8,617.3L1335.2,618.8L1334.9,623.5L1332.6,633.6M1337.3,617.3L1350.3,613.5L1352.2,619.9L1341.9,623.5L1346.6,628.7L1344.2,631.3L1337.7,635.4L1332.6,634.4M1336.8,606.8L1340.1,609.3L1336.8,613.5L1337.3,617.3M1338.0,600.3L1340.5,595.1L1346.6,595.1L1359.6,593.4L1366.9,593.4M1366.9,593.4L1361.5,597.3L1362.0,607.7L1350.3,613.5M1352.2,619.9L1357.8,621.5L1365.2,625.6L1377.8,635.4L1386.2,635.9L1391.8,630.8M1386.2,635.9L1390.8,636.9L1395.0,638.9M1366.9,593.4L1378.3,592.9L1378.3,578.7M1378.3,592.9L1383.9,600.6L1381.1,610.3L1384.8,614.6L1392.7,622.0L1391.8,630.8L1393.9,631.2M1378.3,578.7L1386.2,583.3L1393.2,578.7L1397.4,585.8M1373.1,576.4L1378.3,578.7M1363.1,568.1L1372.2,570.5L1373.1,576.4L1379.2,569.9L1386.2,565.8L1385.7,570.5L1395.3,566.2M1372.2,570.5L1379.2,569.3L1381.5,573.4L1386.2,579.8L1386.2,583.3M1357.2,557.1L1369.9,561.0L1379.2,561.6L1386.2,565.8M1421.0,591.9L1430.5,587.8L1436.5,587.2L1445.8,591.2L1454.7,596.2L1454.7,601.7M1454.7,601.7L1451.9,610.3L1453.3,623.5L1457.5,624.1L1453.3,632.1L1460.8,634.4L1478.5,631.8L1478.9,626.7L1492.4,621.5L1497.1,614.1L1493.4,610.3L1500.8,609.8L1503.2,597.3L1517.1,594.0M1453.3,632.1L1458.0,638.4L1464.0,645.5L1464.0,648.5L1456.7,655.2M1454.7,601.7L1470.1,597.8L1479.4,591.7L1486.4,594.0L1493.4,590.6L1500.4,586.1L1503.2,595.6L1517.1,594.0M1479.4,591.7L1479.9,588.4L1468.7,583.0L1460.8,576.9L1458.0,569.9L1449.6,566.4L1449.1,564.0L1442.1,561.0L1441.3,551.1M1440.8,544.2L1440.7,543.6L1430.5,546.8L1430.5,569.3M1430.5,569.3L1424.9,565.2L1419.7,564.8M1418.8,564.7L1416.5,564.6L1414.8,566.3M1430.5,546.8L1418.8,535.3L1416.2,535.6M1399.6,537.7L1397.8,537.9L1395.5,530.7L1388.5,527.4L1386.2,524.8L1388.5,519.4L1387.6,511.8M1440.7,543.6L1441.1,543.9M1445.0,546.0L1454.2,551.2L1471.9,554.9L1477.5,559.7L1486.8,570.5L1498.0,564.6L1501.3,560.4L1512.0,559.1L1515.7,557.9L1522.3,560.4L1538.6,560.4L1543.2,564.0M1486.8,570.5L1491.5,575.8L1498.0,571.7L1506.4,574.0L1512.0,579.8L1500.4,580.4L1493.4,576.4L1488.7,579.8L1483.6,581.6L1488.2,587.2L1486.4,594.0M1512.0,579.8L1513.4,585.5L1518.5,585.5L1517.1,594.0M1487.3,662.7L1490.1,659.8L1500.8,657.8L1495.7,643.5L1504.6,641.7L1511.5,631.8L1517.1,625.6L1516.7,616.7L1520.9,619.4L1514.3,614.6L1513.4,608.7L1517.1,594.0M1369.4,697.2L1371.7,692.1L1377.3,692.6L1388.5,694.7L1393.2,688.9L1411.8,685.1M1411.8,685.1L1416.9,696.1M1411.8,685.1L1425.8,680.4L1429.1,670.9L1426.7,667.5L1426.7,661.2L1430.5,656.8M1426.7,667.5L1414.6,666.3L1410.0,660.7M1407.2,658.3L1406.5,657.6M1161.1,557.0L1172.8,561.0L1177.4,562.2L1184.4,562.5M1128.6,565.8L1131.5,566.4L1138.7,565.5L1140.6,567.6L1137.3,571.1L1136.9,578.7L1134.5,579.0L1136.9,582.7L1135.5,586.1L1135.0,592.9M1204.5,554.3L1202.1,551.8L1202.1,541.1L1197.9,539.2L1201.7,530.7L1204.9,530.1L1207.7,520.7L1199.3,517.3L1196.5,517.0L1189.1,514.2L1185.6,511.5M1202.1,541.1L1208.6,537.9L1212.8,537.9L1218.2,534.7L1225.9,534.0L1233.3,537.2M1204.9,530.1L1214.2,530.7L1218.2,534.7M1214.2,530.7L1230.1,530.7L1229.1,526.8L1233.8,523.4L1239.4,520.7L1248.7,523.4L1249.2,527.4M1233.3,537.2L1244.5,535.0L1249.2,527.4M1233.3,537.2L1233.0,542.5M1233.4,543.7L1240.8,544.0L1246.4,537.2L1244.5,535.0M1233.8,523.4L1225.9,511.8L1226.8,511.5M1246.4,537.2L1257.1,541.1L1258.5,547.4L1259.9,547.7L1260.8,552.7L1259.0,556.1L1255.7,561.6M1242.9,545.5L1245.5,546.8L1252.9,546.2L1258.5,547.4M1242.9,545.5L1245.0,551.8L1251.5,559.1L1255.7,561.6M1249.2,527.4L1256.6,528.7L1266.4,523.4L1272.5,524.8M1257.1,541.1L1264.1,539.5L1276.2,527.4M1264.1,539.5L1269.2,545.5L1274.3,548.7L1275.3,551.8L1281.3,554.6L1295.3,552.1L1301.7,554.3M1275.3,551.8L1273.9,560.4L1276.7,569.3L1283.7,567.8L1292.3,567.0L1290.7,565.2L1299.4,565.2M1292.3,567.0L1293.5,569.0L1290.9,572.6M1259.9,566.1L1265.0,564.0L1265.5,570.5L1267.4,572.0L1263.0,578.3M1267.4,572.0L1276.2,569.0L1276.7,569.3M1272.5,524.8L1276.2,527.4L1285.5,529.1L1293.5,525.8L1300.9,543.6M1300.9,543.6L1307.7,544.9M1293.5,525.8L1305.6,527.4L1309.3,537.9M1300.9,543.6L1304.2,537.2L1309.3,537.9M1272.5,524.8L1275.3,517.3L1279.9,511.5M1347.9,533.1L1355.9,528.7L1355.0,516.6L1336.4,511.5M829.8,719.5L832.6,730.5L842.8,739.9L855.0,743.5L853.3,751.1L855.9,756.0L856.8,765.8M886.6,748.0L883.4,744.6L884.8,741.3L888.5,739.9L890.8,734.1M856.8,765.8L864.3,767.1L871.3,760.0L876.4,755.1L868.0,752.4L886.6,748.0L890.8,751.1L889.9,759.1L896.9,765.3L906.2,762.4L915.5,760.9L923.0,761.3L928.8,752.9M906.2,762.4L899.2,753.3L902.9,748.0L903.2,744.4M915.5,760.9L916.9,755.1L917.9,745.7M856.8,765.8L844.2,766.2L846.1,776.0L843.5,789.8L840.0,788.0L829.8,782.2L818.6,771.5L812.0,770.0M818.6,771.5L818.6,781.3L812.0,783.6M843.5,789.8L829.8,794.2L824.7,804.5L829.8,813.0L840.5,813.3L840.5,820.3L845.4,820.0M845.4,820.0L849.4,827.5L848.0,839.9L846.8,842.2M846.0,843.8L845.2,845.4L845.6,850.1L841.9,853.8M845.4,820.0L852.2,818.9L864.7,814.4L865.2,824.3L881.5,831.6L889.0,831.6L889.4,844.5L897.4,844.5L898.3,849.6L901.5,853.3L898.3,860.9M845.6,850.1L852.2,859.0L848.9,863.7L850.7,868.5M898.3,860.9L894.1,858.5L882.0,859.9L879.1,868.5M898.3,860.9L899.6,868.5M835.1,689.8L835.4,681.8M853.6,542.4L853.6,533.3L847.0,531.1L841.9,539.2L836.3,546.8L821.4,546.8L812.0,555.1" fill="none" stroke="#f1f1f1" stroke-width="0.7" stroke-linejoin="round"/>
<g font-family="Liberation Sans, sans-serif" stroke="#f2f2f2" stroke-width="0.5" paint-order="stroke" stroke-opacity="0.6">
<text x="1181.4" y="530.2" font-size="5.9" fill="#7a7a7a" text-anchor="middle">France</text>
<text x="1241.0" y="517.3" font-size="5.9" fill="#7a7a7a" text-anchor="middle">Czechia</text>
<text x="1237.0" y="531.8" font-size="5.9" fill="#7a7a7a" text-anchor="middle">Austria</text>
<text x="1237.8" y="541.0" font-size="5.9" fill="#7a7a7a" text-anchor="middle">Slovenia</text>
<text x="1252.3" y="551.0" font-size="5.9" fill="#7a7a7a" text-anchor="middle">Bosnia and</text>
<text x="1252.3" y="556.8" font-size="5.9" fill="#7a7a7a" text-anchor="middle">Herzegovina</text>
<text x="1287.0" y="562.3" font-size="5.9" fill="#7a7a7a" text-anchor="middle">Bulgaria</text>
<text x="1263.6" y="574.8" font-size="5.9" fill="#7a7a7a" text-anchor="middle">Albania</text>
<text x="1280.5" y="586.6" font-size="5.9" fill="#7a7a7a" text-anchor="middle">Greece</text>
<text x="1150.4" y="571.1" font-size="5.9" fill="#7a7a7a" text-anchor="middle">Spain</text>
<text x="1129.4" y="581.0" font-size="5.9" fill="#7a7a7a" text-anchor="middle">Portugal</text>
<text x="1141.4" y="621.0" font-size="5.9" fill="#7a7a7a" text-anchor="middle">Morocco</text>
<text x="1213.9" y="611.6" font-size="5.9" fill="#7a7a7a" text-anchor="middle">Tunisia</text>
<text x="1181.4" y="642.6" font-size="5.9" fill="#7a7a7a" text-anchor="middle">Algeria</text>
<text x="1253.5" y="648.2" font-size="5.9" fill="#7a7a7a" text-anchor="middle">Libya</text>
<text x="1308.5" y="651.1" font-size="5.9" fill="#7a7a7a" text-anchor="middle">Egypt</text>
<text x="1315.0" y="520.4" font-size="5.9" fill="#7a7a7a" text-anchor="middle">Ukraine</text>
<text x="1483.4" y="528.1" font-size="5.9" fill="#7a7a7a" text-anchor="middle">Kazakhstan</text>
<text x="1372.5" y="565.6" font-size="5.9" fill="#7a7a7a" text-anchor="middle">Georgia</text>
<text x="1377.5" y="575.2" font-size="5.9" fill="#7a7a7a" text-anchor="middle">Armenia</text>
<text x="1333.4" y="584.0" font-size="5.9" fill="#7a7a7a" text-anchor="middle">Turkey</text>
<text x="1464.1" y="568.4" font-size="5.9" fill="#7a7a7a" text-anchor="middle">Uzbekistan</text>
<text x="1517.0" y="570.0" font-size="5.9" fill="#7a7a7a" text-anchor="middle">Kyrgyzstan</text>
<text x="1446.3" y="583.7" font-size="5.9" fill="#7a7a7a" text-anchor="middle">Turkmenistan</text>
<text x="1500.8" y="585.3" font-size="5.9" fill="#7a7a7a" text-anchor="middle">Tajikistan</text>
<text x="1324.2" y="606.6" font-size="5.9" fill="#7a7a7a" text-anchor="middle">Cyprus</text>
<text x="1348.9" y="606.6" font-size="5.9" fill="#7a7a7a" text-anchor="middle">Syria</text>
<text x="1371.8" y="617.3" font-size="5.9" fill="#7a7a7a" text-anchor="middle">Iraq</text>
<text x="1422.6" y="619.7" font-size="5.9" fill="#7a7a7a" text-anchor="middle">Iran</text>
<text x="1477.5" y="613.1" font-size="5.9" fill="#7a7a7a" text-anchor="middle">Afghanistan</text>
<text x="1331.8" y="623.4" font-size="5.9" fill="#7a7a7a" text-anchor="middle">Israel</text>
<text x="1391.5" y="636.5" font-size="5.9" fill="#7a7a7a" text-anchor="middle">Kuwait</text>
<text x="1485.4" y="642.3" font-size="5.9" fill="#7a7a7a" text-anchor="middle">Pakistan</text>
<text x="1377.5" y="666.0" font-size="5.9" fill="#7a7a7a" text-anchor="middle">Saudi Arabia</text>
<text x="1422.1" y="661.0" font-size="5.9" fill="#7a7a7a" text-anchor="middle">United Arab</text>
<text x="1422.1" y="666.8" font-size="5.9" fill="#7a7a7a" text-anchor="middle">Emirates</text>
<text x="1349.2" y="702.6" font-size="5.9" fill="#7a7a7a" text-anchor="middle">Eritrea</text>
<text x="1391.5" y="701.3" font-size="5.9" fill="#7a7a7a" text-anchor="middle">Yemen</text>
<text x="1367.8" y="720.6" font-size="5.9" fill="#7a7a7a" text-anchor="middle">Djibouti</text>
<text x="1353.9" y="734.5" font-size="5.9" fill="#7a7a7a" text-anchor="middle">Ethiopia</text>
<text x="1389.9" y="747.3" font-size="5.9" fill="#7a7a7a" text-anchor="middle">Somalia</text>
<text x="1345.8" y="770.8" font-size="5.9" fill="#7a7a7a" text-anchor="middle">Kenya</text>
<text x="1535.4" y="671.6" font-size="5.9" fill="#7a7a7a" text-anchor="middle">India</text>
<text x="1510.8" y="758.6" font-size="5.9" fill="#7a7a7a" text-anchor="middle">Maldives</text>
<text x="1309.3" y="710.8" font-size="5.9" fill="#7a7a7a" text-anchor="middle">Sudan</text>
<text x="1309.3" y="740.4" font-size="5.9" fill="#7a7a7a" text-anchor="middle">South Sudan</text>
<text x="1105.2" y="657.4" font-size="5.9" fill="#7a7a7a" text-anchor="middle">Western</text>
<text x="1105.2" y="663.1" font-size="5.9" fill="#7a7a7a" text-anchor="middle">Sahara</text>
<text x="1120.1" y="683.6" font-size="5.9" fill="#7a7a7a" text-anchor="middle">Mauritania</text>
<text x="1163.3" y="694.5" font-size="5.9" fill="#7a7a7a" text-anchor="middle">Mali</text>
<text x="1213.3" y="694.2" font-size="5.9" fill="#7a7a7a" text-anchor="middle">Niger</text>
<text x="1256.4" y="703.9" font-size="5.9" fill="#7a7a7a" text-anchor="middle">Chad</text>
<text x="1100.2" y="704.7" font-size="5.9" fill="#7a7a7a" text-anchor="middle">Senegal</text>
<text x="1162.0" y="717.9" font-size="5.9" fill="#7a7a7a" text-anchor="middle">Burkina Faso</text>
<text x="1118.0" y="724.8" font-size="5.9" fill="#7a7a7a" text-anchor="middle">Guinea</text>
<text x="1207.2" y="730.3" font-size="5.9" fill="#7a7a7a" text-anchor="middle">Nigeria</text>
<text x="1114.1" y="735.2" font-size="5.9" fill="#7a7a7a" text-anchor="middle">Sierra Leone</text>
<text x="1174.4" y="734.2" font-size="5.9" fill="#7a7a7a" text-anchor="middle">Togo</text>
<text x="1126.0" y="744.4" font-size="5.9" fill="#7a7a7a" text-anchor="middle">Liberia</text>
<text x="1163.9" y="742.6" font-size="5.9" fill="#7a7a7a" text-anchor="middle">Ghana</text>
<text x="1264.9" y="740.8" font-size="5.9" fill="#7a7a7a" text-anchor="middle">Central African</text>
<text x="1264.9" y="747.1" font-size="5.9" fill="#7a7a7a" text-anchor="middle">Republic</text>
<text x="1243.9" y="771.5" font-size="5.9" fill="#7a7a7a" text-anchor="middle">Republic of</text>
<text x="1243.9" y="777.6" font-size="5.9" fill="#7a7a7a" text-anchor="middle">the Congo</text>
<text x="1057.5" y="701.1" font-size="5.9" fill="#7a7a7a" text-anchor="middle">Cape Verde</text>
<text x="1308.7" y="781.3" font-size="5.9" fill="#7a7a7a" text-anchor="middle">Rwanda</text>
<text x="1331.9" y="801.1" font-size="5.9" fill="#7a7a7a" text-anchor="middle">Tanzania</text>
<text x="1252.6" y="827.3" font-size="5.9" fill="#7a7a7a" text-anchor="middle">Angola</text>
<text x="1297.4" y="835.8" font-size="5.9" fill="#7a7a7a" text-anchor="middle">Zambia</text>
<text x="1326.8" y="832.4" font-size="5.9" fill="#7a7a7a" text-anchor="middle">Malawi</text>
<text x="1372.7" y="826.5" font-size="5.9" fill="#7a7a7a" text-anchor="middle">Comoros</text>
<text x="1249.8" y="869.2" font-size="5.9" fill="#7a7a7a" text-anchor="middle">Namibia</text>
<text x="862.3" y="739.0" font-size="5.9" fill="#7a7a7a" text-anchor="middle">Venezuela</text>
<text x="894.3" y="748.2" font-size="5.9" fill="#7a7a7a" text-anchor="middle">Guyana</text>
<text x="921.4" y="750.6" font-size="5.9" fill="#7a7a7a" text-anchor="middle">French</text>
<text x="921.4" y="756.8" font-size="5.9" fill="#7a7a7a" text-anchor="middle">Guiana</text>
<text x="828.1" y="759.5" font-size="5.9" fill="#7a7a7a" text-anchor="middle">Colombia</text>
<text x="928.5" y="816.0" font-size="5.9" fill="#7a7a7a" text-anchor="middle">Brazil</text>
<text x="817.6" y="818.7" font-size="5.9" fill="#7a7a7a" text-anchor="middle">Peru</text>
<text x="869.7" y="849.8" font-size="5.9" fill="#7a7a7a" text-anchor="middle">Bolivia</text>
<text x="842.3" y="686.2" font-size="5.9" fill="#7a7a7a" text-anchor="middle">Dominican</text>
<text x="842.3" y="691.8" font-size="5.9" fill="#7a7a7a" text-anchor="middle">Republic</text>
<text x="882.3" y="700.2" font-size="5.9" fill="#7a7a7a" text-anchor="middle">Guadeloupe</text>
<text x="891.4" y="714.1" font-size="5.9" fill="#7a7a7a" text-anchor="middle">Barbados</text>
<text x="879.7" y="723.4" font-size="5.9" fill="#7a7a7a" text-anchor="middle">Trinidad</text>
<text x="883.6" y="729.5" font-size="5.9" fill="#7a7a7a" text-anchor="middle">and Tobago</text>
<text x="1533.9" y="739.4" font-size="5.9" fill="#7a7a7a" text-anchor="start">Sri Lanka</text>
<text x="823.0" y="657.3" font-size="5.9" fill="#7a7a7a" text-anchor="end">Bahamas</text>
<text x="817.8" y="691.4" font-size="5.9" fill="#7a7a7a" text-anchor="end">Jamaica</text>
<text x="1166.8" y="545.9" font-size="4.8" fill="#a0a0a0" text-anchor="middle">Bordeaux</text>
<text x="1142.2" y="555.1" font-size="4.8" fill="#a0a0a0" text-anchor="middle">Oviedo</text>
<text x="1191.0" y="567.7" font-size="4.8" fill="#a0a0a0" text-anchor="middle">Barcelona</text>
<text x="1219.7" y="570.4" font-size="4.8" fill="#a0a0a0" text-anchor="middle">Rome</text>
<text x="1181.7" y="577.3" font-size="4.8" fill="#a0a0a0" text-anchor="middle">Palma</text>
<text x="1164.1" y="586.5" font-size="4.8" fill="#a0a0a0" text-anchor="middle">Murcia</text>
<text x="1141.0" y="589.7" font-size="4.8" fill="#a0a0a0" text-anchor="middle">Seville</text>
<text x="1183.5" y="593.0" font-size="4.8" fill="#a0a0a0" text-anchor="middle">Algiers</text>
<text x="1224.1" y="593.8" font-size="4.8" fill="#a0a0a0" text-anchor="middle">Tunis</text>
<text x="1166.4" y="599.4" font-size="4.8" fill="#a0a0a0" text-anchor="middle">Oran</text>
<text x="1137.5" y="608.0" font-size="4.8" fill="#a0a0a0" text-anchor="middle">Rabat</text>
<text x="1097.2" y="634.6" font-size="4.8" fill="#a0a0a0" text-anchor="middle">Las Palmas de</text>
<text x="1097.2" y="639.0" font-size="4.8" fill="#a0a0a0" text-anchor="middle">Gran Canaria</text>
<text x="1212.0" y="541.4" font-size="4.8" fill="#a0a0a0" text-anchor="middle">Milan</text>
<text x="1258.0" y="528.2" font-size="4.8" fill="#a0a0a0" text-anchor="middle">Budapest</text>
<text x="1304.7" y="573.7" font-size="4.8" fill="#a0a0a0" text-anchor="middle">Bursa</text>
<text x="1304.0" y="622.7" font-size="4.8" fill="#a0a0a0" text-anchor="middle">Alexandria</text>
<text x="1354.4" y="530.4" font-size="4.8" fill="#a0a0a0" text-anchor="middle">Rostov-on-Don</text>
<text x="1393.4" y="536.5" font-size="4.8" fill="#a0a0a0" text-anchor="middle">Astrakhan</text>
<text x="1350.8" y="544.3" font-size="4.8" fill="#a0a0a0" text-anchor="middle">Krasnodar</text>
<text x="1391.0" y="557.5" font-size="4.8" fill="#a0a0a0" text-anchor="middle">Makhachkala</text>
<text x="1339.0" y="567.5" font-size="4.8" fill="#a0a0a0" text-anchor="middle">Samsun</text>
<text x="1408.7" y="579.6" font-size="4.8" fill="#a0a0a0" text-anchor="middle">Baku</text>
<text x="1385.0" y="585.7" font-size="4.8" fill="#a0a0a0" text-anchor="middle">Tabriz</text>
<text x="1409.2" y="598.7" font-size="4.8" fill="#a0a0a0" text-anchor="middle">Tehran</text>
<text x="1447.3" y="595.7" font-size="4.8" fill="#a0a0a0" text-anchor="middle">Mashhad</text>
<text x="1517.3" y="557.5" font-size="4.8" fill="#a0a0a0" text-anchor="middle">Bishkek</text>
<text x="1510.0" y="622.0" font-size="4.8" fill="#a0a0a0" text-anchor="middle">Faisalabad</text>
<text x="1343.4" y="671.9" font-size="4.8" fill="#a0a0a0" text-anchor="middle">Jeddah</text>
<text x="1321.0" y="699.0" font-size="4.8" fill="#a0a0a0" text-anchor="middle">Khartoum</text>
<text x="1421.5" y="692.8" font-size="4.8" fill="#a0a0a0" text-anchor="middle">Salalah</text>
<text x="1472.9" y="661.5" font-size="4.8" fill="#a0a0a0" text-anchor="middle">Karachi</text>
<text x="1380.7" y="760.2" font-size="4.8" fill="#a0a0a0" text-anchor="middle">Mogadishu</text>
<text x="1321.0" y="767.5" font-size="4.8" fill="#a0a0a0" text-anchor="middle">Kampala</text>
<text x="1350.4" y="782.0" font-size="4.8" fill="#a0a0a0" text-anchor="middle">Nairobi</text>
<text x="1510.4" y="772.3" font-size="4.8" fill="#a0a0a0" text-anchor="middle">Kilhadhoo</text>
<text x="1427.8" y="789.6" font-size="4.8" fill="#a0a0a0" text-anchor="middle">Victoria</text>
<text x="1543.0" y="710.7" font-size="4.8" fill="#a0a0a0" text-anchor="middle">Chennai</text>
<text x="1132.2" y="712.3" font-size="4.8" fill="#a0a0a0" text-anchor="middle">Bamako</text>
<text x="1096.7" y="715.9" font-size="4.8" fill="#a0a0a0" text-anchor="middle">Bissau</text>
<text x="1209.1" y="715.6" font-size="4.8" fill="#a0a0a0" text-anchor="middle">Kano</text>
<text x="1239.4" y="714.8" font-size="4.8" fill="#a0a0a0" text-anchor="middle">N'Djamena</text>
<text x="1285.4" y="715.6" font-size="4.8" fill="#a0a0a0" text-anchor="middle">Nyala</text>
<text x="1150.7" y="753.0" font-size="4.8" fill="#a0a0a0" text-anchor="middle">Abidjan</text>
<text x="1185.1" y="748.2" font-size="4.8" fill="#a0a0a0" text-anchor="middle">Lagos</text>
<text x="1214.4" y="751.4" font-size="4.8" fill="#a0a0a0" text-anchor="middle">Douala</text>
<text x="1213.3" y="767.2" font-size="4.8" fill="#a0a0a0" text-anchor="middle">Libreville</text>
<text x="1240.5" y="788.2" font-size="4.8" fill="#a0a0a0" text-anchor="middle">Kinshasa</text>
<text x="1287.0" y="766.9" font-size="4.8" fill="#a0a0a0" text-anchor="middle">Kisangani</text>
<text x="1273.9" y="795.7" font-size="4.8" fill="#a0a0a0" text-anchor="middle">Kananga</text>
<text x="1297.7" y="821.5" font-size="4.8" fill="#a0a0a0" text-anchor="middle">Lubumbashi</text>
<text x="1352.3" y="837.7" font-size="4.8" fill="#a0a0a0" text-anchor="middle">Nampula</text>
<text x="1231.0" y="808.4" font-size="4.8" fill="#a0a0a0" text-anchor="middle">Luanda</text>
<text x="1232.7" y="824.4" font-size="4.8" fill="#a0a0a0" text-anchor="middle">Lobito</text>
<text x="943.5" y="775.6" font-size="4.8" fill="#a0a0a0" text-anchor="middle">Belém</text>
<text x="962.8" y="780.6" font-size="4.8" fill="#a0a0a0" text-anchor="middle">São Luís</text>
<text x="889.4" y="783.3" font-size="4.8" fill="#a0a0a0" text-anchor="middle">Manaus</text>
<text x="1000.0" y="834.1" font-size="4.8" fill="#a0a0a0" text-anchor="middle">Salvador</text>
<text x="1101.7" y="805.0" font-size="4.8" fill="#a0a0a0" text-anchor="middle">Georgetown</text>
<text x="1142.3" y="841.7" font-size="4.8" fill="#a0a0a0" text-anchor="middle">Longwood</text>
<text x="857.2" y="722.1" font-size="4.8" fill="#a0a0a0" text-anchor="middle">Caracas</text>
<text x="837.0" y="532.8" font-size="4.8" fill="#a0a0a0" text-anchor="middle">Québec</text>
<text x="835.4" y="577.2" font-size="4.8" fill="#a0a0a0" text-anchor="middle">New York</text>
<text x="933.3" y="529.3" font-size="4.8" fill="#a0a0a0" text-anchor="middle">St. John's</text>
<text x="827.7" y="723.0" font-size="4.8" fill="#a0a0a0" text-anchor="end">Cartagena</text>
<text x="825.5" y="741.3" font-size="4.8" fill="#a0a0a0" text-anchor="end">Medellín</text>
<text x="859.3" y="537.5" font-size="4.2" fill="#a6a6a6" text-anchor="middle" letter-spacing="0.5">N.B.</text>
<text x="846.4" y="545.5" font-size="4.2" fill="#a6a6a6" text-anchor="middle" letter-spacing="0.5">MAINE</text>
<text x="874.9" y="546.5" font-size="4.2" fill="#a6a6a6" text-anchor="middle" letter-spacing="0.5">N.S.</text>
<text x="829.7" y="554.1" font-size="4.2" fill="#a6a6a6" text-anchor="middle" letter-spacing="0.5">VT.</text>
<text x="817.3" y="561.8" font-size="4.2" fill="#a6a6a6" text-anchor="middle" letter-spacing="0.5">N.Y.</text>
<text x="833.0" y="564.2" font-size="4.2" fill="#a6a6a6" text-anchor="middle" letter-spacing="0.5">MASS.</text>
<text x="1520.5" y="613.8" font-size="4.2" fill="#a6a6a6" text-anchor="middle" letter-spacing="0.5">J.K.</text>
<text x="1529.4" y="622.3" font-size="4.2" fill="#a6a6a6" text-anchor="middle" letter-spacing="0.5">H.P.</text>
<text x="1521.0" y="629.9" font-size="4.2" fill="#a6a6a6" text-anchor="middle" letter-spacing="0.5">PUN.</text>
<text x="1538.3" y="631.5" font-size="4.2" fill="#a6a6a6" text-anchor="middle" letter-spacing="0.5">UTT.</text>
<text x="1510.8" y="648.0" font-size="4.2" fill="#a6a6a6" text-anchor="middle" letter-spacing="0.5">RAJ.</text>
<text x="1544.7" y="646.0" font-size="4.2" fill="#a6a6a6" text-anchor="middle" letter-spacing="0.5">U.P.</text>
<text x="1501.0" y="664.1" font-size="4.2" fill="#a6a6a6" text-anchor="middle" letter-spacing="0.5">GUJ.</text>
<text x="1526.0" y="683.0" font-size="4.2" fill="#a6a6a6" text-anchor="middle" letter-spacing="0.5">MAH.</text>
<text x="1537.8" y="690.4" font-size="4.2" fill="#a6a6a6" text-anchor="middle" letter-spacing="0.5">TEL.</text>
<text x="1539.0" y="702.8" font-size="4.2" fill="#a6a6a6" text-anchor="middle" letter-spacing="0.5">A.P.</text>
<text x="1522.0" y="705.2" font-size="4.2" fill="#a6a6a6" text-anchor="middle" letter-spacing="0.5">KAR.</text>
<text x="1526.0" y="727.0" font-size="4.2" fill="#a6a6a6" text-anchor="middle" letter-spacing="0.5">KER.</text>
<text x="883.0" y="763.3" font-size="4.2" fill="#a6a6a6" text-anchor="middle" letter-spacing="0.5">RORAIMA</text>
<text x="927.3" y="765.9" font-size="4.2" fill="#a6a6a6" text-anchor="middle" letter-spacing="0.5">AMAPÁ</text>
<text x="867.6" y="791.2" font-size="4.2" fill="#a6a6a6" text-anchor="middle" letter-spacing="0.5">AMAZONAS</text>
<text x="921.4" y="790.7" font-size="4.2" fill="#a6a6a6" text-anchor="middle" letter-spacing="0.5">PARÁ</text>
<text x="958.0" y="795.2" font-size="4.2" fill="#a6a6a6" text-anchor="middle" letter-spacing="0.5">MARANHÃO</text>
<text x="984.6" y="793.9" font-size="4.2" fill="#a6a6a6" text-anchor="middle" letter-spacing="0.5">CEARÁ</text>
<text x="991.5" y="810.0" font-size="4.2" fill="#a6a6a6" text-anchor="middle" letter-spacing="0.5">PERNAMBUCO</text>
<text x="995.0" y="819.4" font-size="4.2" fill="#a6a6a6" text-anchor="middle" letter-spacing="0.5">SERGIPE</text>
<text x="973.3" y="825.0" font-size="4.2" fill="#a6a6a6" text-anchor="middle" letter-spacing="0.5">BAHIA</text>
<text x="873.3" y="817.5" font-size="4.2" fill="#a6a6a6" text-anchor="middle" letter-spacing="0.5">RONDÔNIA</text>
<text x="908.3" y="831.5" font-size="4.2" fill="#a6a6a6" text-anchor="middle" letter-spacing="0.5">MATO</text>
<text x="908.3" y="836.3" font-size="4.2" fill="#a6a6a6" text-anchor="middle" letter-spacing="0.5">GROSSO</text>
<text x="937.8" y="844.9" font-size="4.2" fill="#a6a6a6" text-anchor="middle" letter-spacing="0.5">GOIÁS</text>
<text x="962.8" y="852.8" font-size="4.2" fill="#a6a6a6" text-anchor="middle" letter-spacing="0.5">MINAS</text>
<text x="962.8" y="857.6" font-size="4.2" fill="#a6a6a6" text-anchor="middle" letter-spacing="0.5">GERAIS</text>
<text x="912.8" y="856.8" font-size="4.2" fill="#a6a6a6" text-anchor="middle" letter-spacing="0.5">MATO</text>
<text x="912.8" y="861.7" font-size="4.2" fill="#a6a6a6" text-anchor="middle" letter-spacing="0.5">GROSSO</text>
<text x="912.8" y="866.2" font-size="4.2" fill="#a6a6a6" text-anchor="middle" letter-spacing="0.5">DO SUL</text>
<text x="833.0" y="513.3" font-size="4.2" fill="#a6a6a6" text-anchor="middle" letter-spacing="0.5">QUEBEC</text>
<g fill="#8a8a8a"><circle cx="1166.5" cy="547.7" r="0.8"/><circle cx="1142" cy="556.8" r="0.8"/><circle cx="1179.7" cy="568.7" r="0.8"/><circle cx="1227.3" cy="565.5" r="0.8"/><circle cx="1181.6" cy="579.3" r="0.8"/><circle cx="1164" cy="588.3" r="0.8"/><circle cx="1141.3" cy="591.8" r="0.8"/><circle cx="1183.8" cy="595" r="0.8"/><circle cx="1216.8" cy="594.5" r="0.8"/><circle cx="1166.2" cy="601" r="0.8"/><circle cx="1137.5" cy="610.3" r="0.8"/><circle cx="1097.5" cy="641" r="0.8"/><circle cx="1212" cy="543.8" r="0.8"/><circle cx="1258" cy="530.5" r="0.8"/><circle cx="1304.5" cy="575.6" r="0.8"/><circle cx="1308.7" cy="625" r="0.8"/><circle cx="1354.4" cy="532.3" r="0.8"/><circle cx="1393.4" cy="538.2" r="0.8"/><circle cx="1350.8" cy="546.5" r="0.8"/><circle cx="1391" cy="559.2" r="0.8"/><circle cx="1339" cy="569.4" r="0.8"/><circle cx="1401.7" cy="574.7" r="0.8"/><circle cx="1385" cy="588" r="0.8"/><circle cx="1409.2" cy="601" r="0.8"/><circle cx="1447.3" cy="598" r="0.8"/><circle cx="1517.3" cy="559.8" r="0.8"/><circle cx="1510" cy="624" r="0.8"/><circle cx="1352" cy="673" r="0.8"/><circle cx="1321" cy="701.3" r="0.8"/><circle cx="1421.5" cy="694.5" r="0.8"/><circle cx="1482.3" cy="656.7" r="0.8"/><circle cx="1380.7" cy="762.5" r="0.8"/><circle cx="1321" cy="770" r="0.8"/><circle cx="1341" cy="777" r="0.8"/><circle cx="1510.4" cy="774" r="0.8"/><circle cx="1427.8" cy="791.5" r="0.8"/><circle cx="1543.5" cy="712.5" r="0.8"/><circle cx="1132.2" cy="714.6" r="0.8"/><circle cx="1096.7" cy="718.2" r="0.8"/><circle cx="1209.1" cy="717.5" r="0.8"/><circle cx="1239.4" cy="717" r="0.8"/><circle cx="1285.4" cy="717.5" r="0.8"/><circle cx="1150.7" cy="747.5" r="0.8"/><circle cx="1185.1" cy="742.4" r="0.8"/><circle cx="1214.4" cy="753.2" r="0.8"/><circle cx="1213.3" cy="769.4" r="0.8"/><circle cx="1240.5" cy="790.5" r="0.8"/><circle cx="1287" cy="769" r="0.8"/><circle cx="1273.9" cy="797.7" r="0.8"/><circle cx="1297.7" cy="823.5" r="0.8"/><circle cx="1352.3" cy="839.4" r="0.8"/><circle cx="1234" cy="810" r="0.8"/><circle cx="1232.7" cy="826.5" r="0.8"/><circle cx="943.5" cy="777.5" r="0.8"/><circle cx="962.8" cy="782.6" r="0.8"/><circle cx="889.4" cy="785.2" r="0.8"/><circle cx="989.5" cy="829.5" r="0.8"/><circle cx="1101.7" cy="807" r="0.8"/><circle cx="1142.3" cy="843.5" r="0.8"/><circle cx="857.2" cy="724.5" r="0.8"/><circle cx="837" cy="535.2" r="0.8"/><circle cx="824.4" cy="572.7" r="0.8"/><circle cx="923.3" cy="530.3" r="0.8"/><circle cx="817" cy="726" r="0.8"/><circle cx="816.5" cy="743" r="0.8"/></g>
</g>
<defs><radialGradient id="heatg"><stop offset="0" stop-color="#e0523c"/><stop offset="0.33" stop-color="#e0523c"/><stop offset="0.36" stop-color="#f0964b"/><stop offset="0.44" stop-color="#f0964b"/><stop offset="0.47" stop-color="#f7be5a"/><stop offset="0.52" stop-color="#f7be5a"/><stop offset="0.55" stop-color="#5ab46e" stop-opacity="0.62"/><stop offset="0.82" stop-color="#5ab46e" stop-opacity="0.55"/><stop offset="0.85" stop-color="#5ab46e" stop-opacity="0.36"/><stop offset="0.91" stop-color="#5ab46e" stop-opacity="0.3"/><stop offset="0.94" stop-color="#5ab46e" stop-opacity="0.16"/><stop offset="1" stop-color="#5ab46e" stop-opacity="0.08"/></radialGradient><filter id="shb" x="-30%" y="-30%" width="160%" height="160%"><feGaussianBlur stdDeviation="0.7"/></filter></defs>
<circle cx="1222.5" cy="525.4" r="18.6" fill="url(#heatg)"/>
<circle cx="1289.6" cy="550.8" r="18.6" fill="url(#heatg)"/>
<circle cx="1508.3" cy="685.5" r="18.6" fill="url(#heatg)"/>
<ellipse cx="1232.2" cy="516.4" rx="10.5" ry="7.2" transform="rotate(-48 1232.2 516.4)" fill="#4a4a4a" fill-opacity="0.36" filter="url(#shb)"/>
<ellipse cx="1299.3" cy="541.8" rx="10.5" ry="7.2" transform="rotate(-48 1299.3 541.8)" fill="#4a4a4a" fill-opacity="0.36" filter="url(#shb)"/>
<ellipse cx="1518.0" cy="676.5" rx="10.5" ry="7.2" transform="rotate(-48 1518.0 676.5)" fill="#4a4a4a" fill-opacity="0.36" filter="url(#shb)"/>
<g transform="translate(1162.8,516.4)"><path d="M0,0 C-2.6,-5.6 -11.75,-12.6 -11.75,-21.3 A11.75,11.75 0 1 1 11.75,-21.3 C11.75,-12.6 2.6,-5.6 0,0 Z" fill="#00962e"/><circle cx="0" cy="-23.6" r="4" fill="#fff"/></g>
<g transform="translate(1217.7,536.9)"><path d="M0,0 C-2.6,-5.6 -11.75,-12.6 -11.75,-21.3 A11.75,11.75 0 1 1 11.75,-21.3 C11.75,-12.6 2.6,-5.6 0,0 Z" fill="#00962e"/><circle cx="0" cy="-23.6" r="4" fill="#fff"/></g>
<g transform="translate(1284.8,562.3)"><path d="M0,0 C-2.6,-5.6 -11.75,-12.6 -11.75,-21.3 A11.75,11.75 0 1 1 11.75,-21.3 C11.75,-12.6 2.6,-5.6 0,0 Z" fill="#00962e"/><circle cx="0" cy="-23.6" r="4" fill="#fff"/></g>
<g transform="translate(1503.5,697.0)"><path d="M0,0 C-2.6,-5.6 -11.75,-12.6 -11.75,-21.3 A11.75,11.75 0 1 1 11.75,-21.3 C11.75,-12.6 2.6,-5.6 0,0 Z" fill="#00962e"/><circle cx="0" cy="-23.6" r="4" fill="#fff"/></g>
<rect x="823.3" y="791.7" width="30.4" height="57" rx="3.5" fill="#fff" stroke="#a4a8ab" stroke-width="1.7"/>
<rect x="824.2" y="818.9" width="28.6" height="1" fill="#ccc"/>
<path d="M833,806.7 h11 M838.5,801.2 v11 M833,834.4 h11" stroke="#111" stroke-width="1.8" fill="none"/>
<circle cx="829.8" cy="859.2" r="7.4" fill="#fff" stroke="#444" stroke-width="1"/>
<circle cx="829.8" cy="859.2" r="6" fill="#fff" stroke="#444" stroke-width="0.6"/>
<path d="M826,863.2 C825.6,859.4 827.6,855.6 831,855.4 C834,855.3 835.2,858 834,860.2 C832.6,862.6 828.6,863.2 826,863.2 Z" fill="#4a4a4a"/>
<path d="M831.2,856.8 l0.7,1.4 1.4,0.7 -1.4,0.7 -0.7,1.4 -0.7,-1.4 -1.4,-0.7 1.4,-0.7 Z" fill="#fff"/>
<text x="839.8" y="862.3" font-family="Liberation Sans, sans-serif" font-size="11.8" font-weight="700" fill="#fff" stroke="#444" stroke-width="1.4" paint-order="stroke" letter-spacing="-0.1" stroke-linejoin="round">mapbox</text>
<rect x="1271.6" y="853.9" width="281" height="15" fill="#fff" fill-opacity="0.72"/>
<text x="1276" y="865.2" font-family="Liberation Sans, sans-serif" font-size="11" fill="#333" textLength="271.3" lengthAdjust="spacing"><tspan fill="#0078a8">Leaflet</tspan> | © <tspan fill="#0078a8">Mapbox</tspan> © <tspan fill="#0078a8">OpenStreetMap</tspan> <tspan fill="#0078a8" font-weight="700">Improve this map</tspan></text>

</g>
</svg>
<!-- icons -->
<svg width="1560" height="930" style="left:0;top:0" viewBox="0 0 1560 930">
<!-- sidebar icons -->
<g class="sic">
<rect x="12.9" y="87.3" width="4.6" height="5.2" rx="1.2"/>
<rect x="20.2" y="83" width="4.6" height="9.5" rx="1.2"/>
<rect x="27.4" y="76.3" width="4.6" height="16.2" rx="1.4"/>
<rect x="13.3" y="138.4" width="7.4" height="7" rx="0.5" stroke-width="1.2"/>
<rect x="23.8" y="138.4" width="7.6" height="7" rx="0.5" stroke-width="1.2"/>
<rect x="13.3" y="148.6" width="7.4" height="6.8" rx="0.5" stroke-width="1.2"/>
<rect x="23.8" y="148.6" width="7.6" height="6.8" rx="0.5" stroke-width="1.2"/>
<path d="M22.3,199.2 L31.6,202.2 L31.6,211 C31.6,216 27.5,219 22.3,221.4 C17.2,219 13.1,216 13.1,211 L13.1,202.2 Z" stroke-width="1.2"/>
<!-- rocket -->
<path d="M22.3,255.9 C19,259 16.8,264 16.9,268.5 C17,272.5 18,276 19.6,278.2 L25.1,278.2 C26.7,276 27.7,272.5 27.8,268.5 C27.9,264 25.6,259 22.3,255.9 Z"/>
<path d="M16.9,269.6 C14.8,272 13.6,275 13.6,278.6 C15.2,276.8 17,275.8 18.6,275.6"/>
<path d="M27.8,269.6 C29.9,272 31.1,275 31.1,278.6 C29.5,276.8 27.7,275.8 26.1,275.6"/>
<path d="M19.5,279 C19.3,284 20.5,287.5 22.3,290.3 C24.1,287.5 25.4,284 25.2,279"/>
<circle cx="22.3" cy="263.7" r="0.9" fill="#2d5a94"/>
<!-- compass -->
<circle cx="22.3" cy="336.9" r="9.2"/>
<path d="M27,332.7 L21.3,335 L17.7,341 L23.6,338.8 Z" stroke-width="1"/>
<!-- lock w arrows -->
<rect x="18" y="397" width="8.8" height="6" rx="0.6"/>
<path d="M19.2,397 L19.2,395.4 C19.2,393.4 20.6,392 22.4,392 C24.2,392 25.6,393.4 25.6,395.4 L25.6,397"/>
<path d="M13.4,400.4 L18,400.4 M26.8,400.4 L31.4,400.4 M15.2,398.8 L13.4,400.4 L15.2,402 M29.6,398.8 L31.4,400.4 L29.6,402"/>
<path d="M13.4,406.6 L17.5,406.6 C20,406.6 21.5,405 22.4,403.2 C23.3,405 24.8,406.6 27.3,406.6 L31.4,406.6 M15.2,405 L13.4,406.6 L15.2,408.2 M29.6,405 L31.4,406.6 L29.6,408.2"/>
<!-- wrench -->
<path d="M19.3,455.4 C17.3,454.6 15.2,455 13.9,456.4 L16.6,459.1 C17.2,459.7 17.2,460.6 16.6,461.2 C16,461.8 15.1,461.8 14.5,461.2 L13.4,460.1 C12.8,462 13.3,464 14.7,465.2 C16.2,466.5 18.2,466.8 19.9,466 L27.3,471.5 C28.6,472.5 30.4,472.3 31.4,471.1 C32.4,469.9 32.2,468.1 31,467.1 L22.7,461.2 C23.2,459 22.3,456.6 19.3,455.4 Z"/>
<!-- warning -->
<path d="M22.4,519.6 L30.9,532.8 L13.8,532.8 Z" stroke-width="1.1"/>
<path d="M22.4,524.2 L22.4,529.2" stroke-width="1.2"/>
<circle cx="22.4" cy="531" r="0.6" fill="#2d5a94" stroke="none"/>
<!-- bulb -->
<path d="M19.6,595.3 L19.6,593.5 C19.6,591.5 16,590 16,585.8 C16,582.2 19,579.3 22.7,579.3 C26.4,579.3 29.4,582.2 29.4,585.8 C29.4,590 25.9,591.5 25.9,593.5 L25.9,595.3 Z" stroke-width="1.2"/>
<path d="M20.2,598.9 L25.2,598.9" stroke-width="1.2"/>
</g>
<!-- beta badge -->
<circle cx="35.1" cy="384.4" r="6.2" fill="#eaf4f9"/>
<circle cx="35.1" cy="384.4" r="5.6" fill="#1c4a82"/>
<text x="35.2" y="387.6" font-family="Liberation Sans, sans-serif" font-size="9" font-weight="700" fill="#fff" text-anchor="middle">β</text>
<!-- expand chevrons -->
<path d="M16,882.2 L20.4,882.2 L25,888.6 L20.4,895 L16,895 L20.4,888.6 Z M22.6,882.2 L27,882.2 L31.6,888.6 L27,895 L22.6,895 L27,888.6 Z" fill="#14386e"/>

<!-- header icons -->
<g class="ic">
<rect x="348.5" y="76.5" width="7.2" height="7.2" stroke-width="1.1"/>
<rect x="359.9" y="76.5" width="7.4" height="7.2" stroke-width="1.1"/>
<rect x="348.5" y="87.4" width="7.2" height="7.2" stroke-width="1.1"/>
<rect x="359.9" y="87.4" width="7.4" height="7.2" stroke-width="1.1"/>
<path d="M605.2,91 C602.6,91 601.4,89 601.5,87 C601.6,84.6 603.8,83.3 606.4,83.3 C607.4,81.2 609.6,80.1 612.4,80.1 C615.6,80.1 617.4,82 618,84.6 C620,85.2 621,86.8 621,88.2 C621,90 619.6,91 618,91 Z"/>
<path d="M867.6,93.6 C864.5,89.5 861.4,86.5 861.4,82.6 C861.4,79.2 864.2,76.5 867.6,76.5 C871,76.5 873.8,79.2 873.8,82.6 C873.8,86.5 870.7,89.5 867.6,93.6 Z"/>
<circle cx="867.7" cy="82.2" r="1.9" fill="#3d7be6" stroke="none"/>
<!-- edges -->
<path d="M1123.5,78.2 L1123.5,93.7"/>
<circle cx="1130.3" cy="83" r="6.8"/>
<path d="M1133.5,77.3 C1130,78 1127.6,80.5 1127.6,84 L1127.7,89.4 C1127.2,91.6 1125.6,93.2 1123.5,93.7"/>
<path d="M1123.6,85.5 C1124.3,87.3 1125.8,88.8 1127.6,89.3"/>
<!-- right circles -->
<circle cx="1384.4" cy="85.4" r="10.6"/>
<path d="M1374,86.6 L1379,86.6 L1381.2,84.6 L1383,88.8 L1386.8,82 L1389.6,86.6 L1394.8,86.6"/>
<circle cx="1423.5" cy="85.4" r="10.6"/>
<path d="M1418.4,89 C1419.6,88.2 1419.4,86 1419.6,83.6 C1419.8,81.2 1421.4,79.4 1423.5,79.4 C1425.6,79.4 1427.2,81.2 1427.4,83.6 C1427.6,86 1427.4,88.2 1428.6,89 Z"/>
<path d="M1422.3,89.4 C1422.5,90.4 1424.5,90.4 1424.7,89.4"/>
<circle cx="1462.6" cy="85.4" r="10.6"/>
<path d="M1459.6,82.2 C1459.8,80.4 1461,79.4 1462.8,79.4 C1464.8,79.4 1466,80.6 1466,82.2 C1466,84.6 1462.6,85 1462.6,88.2"/>
<circle cx="1462.6" cy="91" r="0.7" fill="#5b8ff0" stroke="none"/>
<circle cx="1501.4" cy="85.4" r="10.6"/>
<path d="M1493.6,92.4 C1495,90.6 1498.6,90.4 1499.6,88.4 C1498.2,87 1497.8,85 1497.8,83.4 C1497.8,81 1499.2,79.4 1501.4,79.4 C1503.6,79.4 1505,81 1505,83.4 C1505,85 1504.6,87 1503.2,88.4 C1504.2,90.4 1507.8,90.6 1509.2,92.4"/>
<!-- users -->
<path d="M788.8,136.4 C786.6,135 785.8,132.4 785.8,130.2 C785.8,127.2 787.6,125 790.4,125 C793.2,125 795,127.2 795,130.2 C795,132.4 794.2,135 792.2,136.4 C792.6,138.4 797.6,138.4 797.8,140 C797.8,141.4 794.6,142.8 790.4,142.8 C786.2,142.8 783,141.4 783.2,140 C783.4,138.4 788.4,138.4 788.8,136.4 Z"/>
<!-- device -->
<rect x="988.3" y="125.4" width="10.4" height="17" rx="1.4"/>
<path d="M992.4,139.6 L994.6,139.6"/>
<!-- networks -->
<rect x="1209.8" y="125.4" width="6.2" height="5.8"/>
<rect x="1203.8" y="136.4" width="6.2" height="5.8"/>
<rect x="1215.4" y="136.4" width="6.2" height="5.8"/>
<!-- globe -->
<circle cx="1430" cy="133.8" r="9.4"/>
<ellipse cx="1430" cy="133.8" rx="4.2" ry="9.4"/>
<path d="M1430,124.4 L1430,143.2 M1420.6,133.8 L1439.4,133.8 M1422,129 L1438,129 M1422,138.6 L1438,138.6"/>
</g>
<!-- trend icons -->
<path d="M747,177.2 L751.2,181 L753.6,179 L758.6,184" fill="none" stroke="#0f9a33" stroke-width="1.4"/>
<path d="M760.6,185 L756.4,184.6 L760.2,180.8 Z" fill="#0f9a33"/>
<path d="M1501.6,183.8 L1506,179.8 L1508.4,181.8 L1513.6,177.4" fill="none" stroke="#0f9a33" stroke-width="1.4"/>
<path d="M1515.8,176 L1515.2,180.4 L1511.4,176.6 Z" fill="#0f9a33"/>
<!-- chart ticks -->
<g stroke="#dcdcdc" stroke-width="1">
<path d="M144.5,393 v5.5 M208.6,393 v5.5 M272.7,393 v5.5 M336.8,393 v5.5 M400.9,393 v5.5 M465,393 v5.5 M529.1,393 v5.5 M593.2,393 v5.5 M657.3,393 v5.5"/>
</g>
<!-- recommendations chevron -->
<path d="M1524.6,906.6 L1530.6,912.2 L1536.6,906.6" fill="none" stroke="#fff" stroke-width="2"/>
<!-- protect wheel icon -->
<g fill="none" stroke="#2a5f9e" stroke-width="1">
<circle cx="103.3" cy="180.4" r="5.6" stroke="#5db4ea" stroke-width="1.6"/>
<circle cx="103.3" cy="180.4" r="2.6" stroke="#8a8a8a" stroke-width="0.8"/>
<path d="M103.3,171 L103.3,175 M103.3,185.8 L103.3,189.8 M95.2,175.7 L98.6,177.7 M108,183.1 L111.4,185.1 M95.2,185.1 L98.6,183.1 M108,177.7 L111.4,175.7" stroke-width="1.5"/>
<circle cx="103.3" cy="180.4" r="7" stroke="#3f73ad" stroke-width="0.7"/>
</g>
<!-- optimize rocket icon -->
<g fill="none" stroke="#56b4ea" stroke-width="0.8">
<path d="M860,165.4 C857,168.5 855.2,174 855.4,179.5 L855.6,185 L864.4,185 L864.6,179.5 C864.8,174 863,168.5 860,165.4 Z" fill="#fff"/>
<path d="M855.4,178 C853.8,180 853,182.6 853,185.8 C854,184.4 855,183.8 856,183.6 M864.6,178 C866.2,180 867,182.6 867,185.8 C866,184.4 865,183.8 864,183.6" stroke="#23406b" stroke-width="0.9"/>
<path d="M857.4,186 C857.4,190 858.6,193.4 860,195.6 C861.4,193.4 862.6,190 862.6,186" stroke="#23406b" stroke-width="0.9"/>
<path d="M860,176.4 L860,185.6 M858.6,187 L860,193 L861.4,187" stroke="#23406b" stroke-width="1"/>
<circle cx="860" cy="171.6" r="1" fill="#e9a13b" stroke="none"/>
</g>
</svg>

<!-- texts -->
<span class="t" style="left:375.9px;top:80px;font-size:11.5px;color:#111;-webkit-text-stroke:0.4px #111;letter-spacing:-0.5px;">14</span>
<span class="t" style="left:396.7px;top:80px;font-size:11.5px;color:#4a7fe0;letter-spacing:-0.24px;">Apps</span>
<span class="t" style="left:629.5px;top:80px;font-size:11.5px;color:#111;-webkit-text-stroke:0.4px #111;">3</span>
<span class="t" style="left:643.6px;top:80px;font-size:11.5px;color:#4a7fe0;letter-spacing:-0.14px;">Clouds</span>
<span class="t" style="left:886.0px;top:80px;font-size:11.5px;color:#111;-webkit-text-stroke:0.4px #111;">6</span>
<span class="t" style="left:900.5px;top:80px;font-size:11.5px;color:#4a7fe0;letter-spacing:-0.37px;">Regions</span>
<span class="t" style="left:1147.5px;top:80px;font-size:11.5px;color:#111;-webkit-text-stroke:0.4px #111;">6</span>
<span class="t" style="left:1162.3px;top:80px;font-size:11.5px;color:#4a7fe0;letter-spacing:-0.65px;">Edges</span>
<span class="t" style="left:86.9px;top:129px;font-size:11.5px;color:#333;letter-spacing:0.1px;">View the following data from:</span>
<span class="t" style="left:266.5px;top:129px;font-size:11.5px;color:#333;letter-spacing:-0.43px;">Day</span>
<span class="t" style="left:324.0px;top:129px;font-size:11.5px;color:#333;letter-spacing:0.1px;">Week</span>
<span class="t" style="left:391.5px;top:129px;font-size:11.5px;color:#333;letter-spacing:0.38px;">Month</span>
<span class="t" style="left:809.0px;top:129px;font-size:11.5px;color:#111;-webkit-text-stroke:0.4px #111;letter-spacing:-0.3px;">12</span>
<span class="t" style="left:829.5px;top:129px;font-size:11.5px;color:#4a7fe0;letter-spacing:-0.26px;">Users</span>
<span class="t" style="left:1011.5px;top:129px;font-size:11.5px;color:#111;-webkit-text-stroke:0.4px #111;">6</span>
<span class="t" style="left:1025.5px;top:129px;font-size:11.5px;color:#4a7fe0;letter-spacing:-0.25px;">Device OS</span>
<span class="t" style="left:1231.5px;top:129px;font-size:11.5px;color:#111;-webkit-text-stroke:0.4px #111;">5</span>
<span class="t" style="left:1245.5px;top:129px;font-size:11.5px;color:#4a7fe0;letter-spacing:0.29px;">Networks</span>
<span class="t" style="left:1448.0px;top:129px;font-size:11.5px;color:#111;-webkit-text-stroke:0.4px #111;">8</span>
<span class="t" style="left:1462.5px;top:129px;font-size:11.5px;color:#4a7fe0;letter-spacing:0.22px;">Countries</span>
<span class="t" style="left:136.2px;top:173px;font-size:14.8px;color:#222;-webkit-text-stroke:0.55px #222;letter-spacing:-0.32px;">PROTECT</span>
<span class="t" style="left:591.5px;top:171px;font-size:22px;color:#2ba1cc;letter-spacing:-1.08px;">74</span>
<span class="t" style="left:627.4px;top:175px;font-size:11.5px;color:#555;-webkit-text-stroke:0.2px #555;letter-spacing:-0.15px;">Risk score</span>
<span class="t" style="left:691.9px;top:175px;font-size:11.5px;color:#0f9a33;-webkit-text-stroke:0.3px #0f9a33;letter-spacing:-0.42px;">( -10 % )</span>
<span class="t" style="left:144.7px;top:221px;font-size:11.8px;color:#333;-webkit-text-stroke:0.5px #333;letter-spacing:-0.1px;">Number of Requests</span>
<span class="t" style="left:632.0px;top:222px;font-size:9.5px;color:#777;font-weight:700;">=</span>
<span class="t" style="left:643.7px;top:222px;font-size:11.5px;color:#333;letter-spacing:0.87px;">Policy Denied</span>
<span class="t" style="left:118.3px;top:249px;font-size:11.5px;color:#444;letter-spacing:0.55px;">2.0</span>
<span class="t" style="left:118.3px;top:284px;font-size:11.5px;color:#444;letter-spacing:0.55px;">1.5</span>
<span class="t" style="left:118.3px;top:319px;font-size:11.5px;color:#444;letter-spacing:0.55px;">1.0</span>
<span class="t" style="left:118.3px;top:354px;font-size:11.5px;color:#444;letter-spacing:0.55px;">0.5</span>
<span class="t" style="left:118.3px;top:384px;font-size:11.5px;color:#444;letter-spacing:0.55px;">0.0</span>
<span class="t" style="left:126.6px;top:401px;font-size:11.5px;color:#444;letter-spacing:0.85px;">07 AM</span>
<span class="t" style="left:192.9px;top:401px;font-size:11.5px;color:#444;letter-spacing:0.68px;">07:15</span>
<span class="t" style="left:257.0px;top:401px;font-size:11.5px;color:#444;letter-spacing:0.68px;">07:30</span>
<span class="t" style="left:321.1px;top:401px;font-size:11.5px;color:#444;letter-spacing:0.68px;">07:45</span>
<span class="t" style="left:383.0px;top:401px;font-size:11.5px;color:#444;letter-spacing:0.85px;">08 AM</span>
<span class="t" style="left:449.4px;top:401px;font-size:11.5px;color:#444;letter-spacing:0.68px;">08:15</span>
<span class="t" style="left:513.4px;top:401px;font-size:11.5px;color:#444;letter-spacing:0.68px;">08:30</span>
<span class="t" style="left:577.5px;top:401px;font-size:11.5px;color:#444;letter-spacing:0.68px;">08:45</span>
<span class="t" style="left:639.4px;top:401px;font-size:11.5px;color:#444;letter-spacing:0.85px;">09 AM</span>
<span class="t" style="left:891.9px;top:173px;font-size:14.8px;color:#222;-webkit-text-stroke:0.55px #222;letter-spacing:0.55px;">OPTIMIZE</span>
<span class="t" style="left:1350.9px;top:171px;font-size:22px;color:#2ba1cc;letter-spacing:-0.98px;">72</span>
<span class="t" style="left:1387.4px;top:175px;font-size:11.5px;color:#555;-webkit-text-stroke:0.2px #555;letter-spacing:-0.1px;">UX score</span>
<span class="t" style="left:1450.5px;top:175px;font-size:11.5px;color:#0f9a33;-webkit-text-stroke:0.3px #0f9a33;letter-spacing:-0.61px;">( 27 % )</span>
<span class="t" style="left:1066.8px;top:248px;font-size:19.5px;color:#222;letter-spacing:0.05px;">49 %</span>
<span class="t" style="left:1066.8px;top:275px;font-size:11px;color:#4a7fe0;letter-spacing:0.28px;">Latency reduction</span>
<span class="t" style="left:1206.3px;top:248px;font-size:19.5px;color:#222;letter-spacing:0.98px;">6.781 MB</span>
<span class="t" style="left:1206.3px;top:275px;font-size:11px;color:#4a7fe0;letter-spacing:-0.05px;">Data saved</span>
<span class="t" style="left:901.2px;top:336px;font-size:11.8px;color:#333;-webkit-text-stroke:0.5px #333;letter-spacing:-0.01px;">Apps Health</span>
<span class="t" style="left:1245.8px;top:337px;font-size:10px;color:#333;-webkit-text-stroke:0.25px #333;">=</span>
<span class="t" style="left:1257.5px;top:336px;font-size:11.5px;color:#333;letter-spacing:0.89px;">Excellent</span>
<span class="t" style="left:1355.8px;top:337px;font-size:10px;color:#333;-webkit-text-stroke:0.25px #333;">=</span>
<span class="t" style="left:1367.7px;top:336px;font-size:11.5px;color:#333;letter-spacing:0.69px;">Good</span>
<span class="t" style="left:1442.8px;top:337px;font-size:10px;color:#333;-webkit-text-stroke:0.25px #333;">=</span>
<span class="t" style="left:1454.2px;top:336px;font-size:11.5px;color:#333;letter-spacing:0.9px;">Poor</span>
<span class="t" style="left:769.6px;top:466px;font-size:14.8px;color:#222;-webkit-text-stroke:0.55px #222;letter-spacing:-0.04px;">INSIGHTS</span>
<span class="t" style="left:111.5px;top:519px;font-size:15.4px;color:#333;-webkit-text-stroke:0.5px #333;letter-spacing:0.83px;">Clients</span>
<span class="t" style="left:384.4px;top:519px;font-size:15.4px;color:#333;-webkit-text-stroke:0.5px #333;letter-spacing:0.19px;">Device OS</span>
<span class="t" style="left:658.7px;top:519px;font-size:15.4px;color:#333;-webkit-text-stroke:0.5px #333;letter-spacing:0.46px;">Service Apps</span>
<span class="t" style="left:321.5px;top:554px;font-size:11.5px;color:#222;letter-spacing:0.61px;">Windows 10</span>
<span class="t" style="left:313.5px;top:573px;font-size:11.5px;color:#222;letter-spacing:0.37px;">other_devices</span>
<span class="t" style="left:360.3px;top:689px;font-size:11.5px;color:#222;letter-spacing:0.45px;">Linux</span>
<span class="t" style="left:340.0px;top:815px;font-size:11.5px;color:#222;letter-spacing:0.06px;">Mac OSX</span>
<span class="t" style="left:299.0px;top:825px;font-size:11.5px;color:#222;letter-spacing:0.5px;">Windows NT 4.0</span>
<span class="t" style="left:170.0px;top:815px;font-size:11.5px;color:#222;letter-spacing:0.36px;">other_users</span>
<span class="t" style="left:609.5px;top:554px;font-size:11.5px;color:#222;letter-spacing:0.44px;">other_apps</span>
<span class="t" style="left:569.7px;top:592px;font-size:11.5px;color:#222;letter-spacing:0.21px;">Demo S3 bucket ...</span>
<span class="t" style="left:594.9px;top:628px;font-size:11.5px;color:#222;letter-spacing:0.16px;">Jenkins - GCP</span>
<span class="t" style="left:570.0px;top:703px;font-size:11.5px;color:#222;letter-spacing:0.4px;">Private-DC-App-...</span>
<span class="t" style="left:571.0px;top:793px;font-size:11.5px;color:#222;letter-spacing:0.22px;">aws ashburn vpc...</span>
<span class="t" style="left:715.0px;top:903px;font-size:11.6px;color:#fff;-webkit-text-stroke:0.5px #fff;letter-spacing:0.03px;">RECOMMENDATIONS</span></body>
</html>
